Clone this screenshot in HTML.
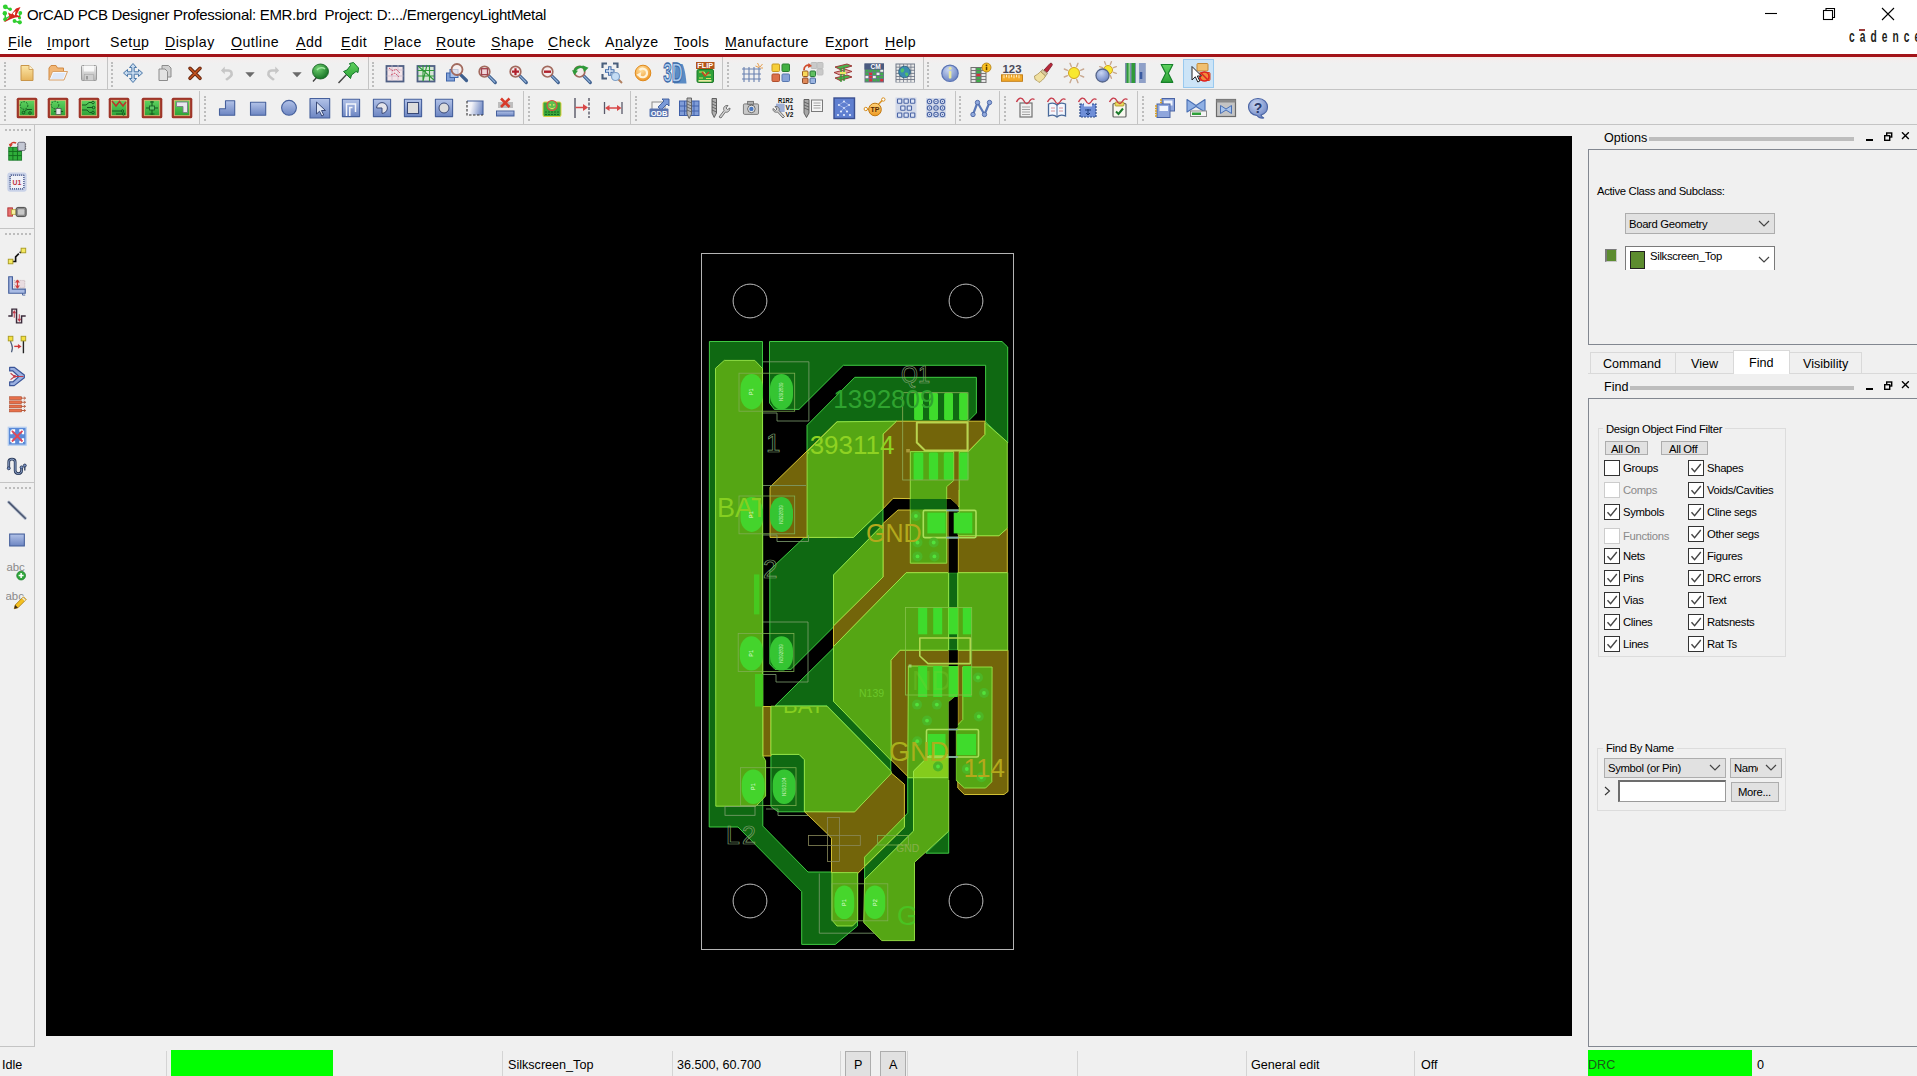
<!DOCTYPE html>
<html><head><meta charset="utf-8"><title>OrCAD PCB Designer</title>
<style>
*{box-sizing:border-box;margin:0;padding:0}
html,body{width:1917px;height:1076px;overflow:hidden;background:#f0f0f0;font-family:"Liberation Sans",sans-serif;color:#000}
.abs{position:absolute}
#titlebar{position:absolute;left:0;top:0;width:1917px;height:54px;background:#fff}
#title{position:absolute;left:27px;top:5px;font-size:15px;letter-spacing:-0.3px;line-height:19px;white-space:pre;color:#000}
.menu{position:absolute;top:33px;font-size:14.2px;letter-spacing:0.45px;line-height:19px;white-space:pre;color:#000}
.menu u{text-decoration:underline;text-underline-offset:1.5px;text-decoration-thickness:1px}
#redline{position:absolute;left:0;top:54px;width:1917px;height:3px;background:#a31318}
#tb1{position:absolute;left:0;top:57px;width:1917px;height:33px;background:linear-gradient(#f8e6e2 0,#f3eeee 3px,#f0f0f0 7px);border-bottom:1px solid #c4c4c4}
#tb2{position:absolute;left:0;top:91px;width:1917px;height:34px;background:#f0f0f0;border-bottom:1px solid #c4c4c4}
#canvas{position:absolute;left:46px;top:136px;width:1526px;height:900px;background:#000}
.t11{font-family:"Liberation Sans",sans-serif;font-size:11.3px;letter-spacing:-0.33px;margin-top:1px;line-height:13px;white-space:pre;position:absolute;color:#000}
.t13{font-family:"Liberation Sans",sans-serif;font-size:12.6px;margin-top:1px;line-height:15px;white-space:pre;position:absolute;color:#000}
.cb{position:absolute;width:16px;height:16px;margin-top:-1px;background:#fff;border:1px solid #333}
.cb.dis{border-color:#ccc}
.cb svg{position:absolute;left:0;top:0}
.vsep{position:absolute;width:1px;background:#c4c4c4}
.grip{position:absolute;width:2px;border-left:2px dotted #bdbdbd}
.gripH{position:absolute;height:2px;border-top:2px dotted #bdbdbd}
</style></head>
<body>
<div id="titlebar">
<svg class="abs" style="left:1px;top:3px" width="22" height="22" viewBox="0 0 22 22"><g stroke="#35c035" stroke-width="1.5" fill="none"><path d="M4.5 4 L9 6.5 M4 10.5 L4.5 16 M13.5 18 L18.5 19.5 M19 9.5 L18.5 14.5 M4.5 16 L9 13"/></g><g fill="#30d030"><circle cx="4.3" cy="3.8" r="2.4"/><circle cx="9.2" cy="6.3" r="1.7"/><circle cx="3.8" cy="10.3" r="2.2"/><circle cx="4.3" cy="16.3" r="2.1"/><circle cx="13.5" cy="18" r="1.9"/><circle cx="18.8" cy="19.3" r="2.1"/><circle cx="19.3" cy="10" r="1.9"/><circle cx="18.5" cy="14.8" r="1.6"/></g><path d="M2.5 19 C6 17 8.5 14.5 10.5 11 L15 5.5 L19.5 4 L17.5 8 L15.5 12 C17 12.3 18.5 13 19.5 14 C16.5 13.8 13 14.5 10 16 C7 17.5 4.5 19 2.5 19 Z" fill="#d6261c"/><path d="M11.5 10.5 L14.5 8 L13.8 12.5 Z" fill="#fff"/><path d="M7 9.5 L11 11.5 L8.5 14 Z" fill="#d6261c"/></svg>
<div id="title">OrCAD PCB Designer Professional: EMR.brd  Project: D:.../EmergencyLightMetal</div>
<div class="menu" style="left:8px" id="m0"><u>F</u>ile</div>
<div class="menu" style="left:47px" id="m1"><u>I</u>mport</div>
<div class="menu" style="left:110px" id="m2">Set<u>u</u>p</div>
<div class="menu" style="left:165px" id="m3"><u>D</u>isplay</div>
<div class="menu" style="left:231px" id="m4"><u>O</u>utline</div>
<div class="menu" style="left:296px" id="m5"><u>A</u>dd</div>
<div class="menu" style="left:341px" id="m6"><u>E</u>dit</div>
<div class="menu" style="left:384px" id="m7"><u>P</u>lace</div>
<div class="menu" style="left:436px" id="m8"><u>R</u>oute</div>
<div class="menu" style="left:491px" id="m9"><u>S</u>hape</div>
<div class="menu" style="left:548px" id="m10"><u>C</u>heck</div>
<div class="menu" style="left:605px" id="m11">A<u>n</u>alyze</div>
<div class="menu" style="left:674px" id="m12"><u>T</u>ools</div>
<div class="menu" style="left:725px" id="m13"><u>M</u>anufacture</div>
<div class="menu" style="left:825px" id="m14">E<u>x</u>port</div>
<div class="menu" style="left:885px" id="m15"><u>H</u>elp</div>
<svg class="abs" style="left:1750px;top:0" width="167" height="29" viewBox="0 0 167 29"><g fill="none" stroke="#000" stroke-width="1.1"><path d="M15 13.5 H27"/><path d="M76 10.5 V8.5 H84.5 V17.5 H82.5"/><rect x="73.5" y="10.5" width="9" height="9"/><path d="M132 8 L144 20 M144 8 L132 20"/></g></svg>
<div class="abs" id="cad" style="left:1849px;top:27.6px;font-family:'Liberation Sans',sans-serif;font-weight:bold;font-size:17px;line-height:18px;letter-spacing:8.4px;white-space:pre;color:#231f20;transform:scaleX(0.6);transform-origin:0 0">cadence</div>
<div class="abs" style="left:1859px;top:29px;width:6px;height:1.5px;background:#9b3a3a"></div>
</div>
<div id="redline"></div>
<div id="tb1"></div>
<div id="tb2"></div>
<div id="canvas"></div>

<svg width="0" height="0" style="position:absolute"><defs>
<linearGradient id="gb" x1="0" y1="0" x2="0" y2="1"><stop offset="0" stop-color="#b3c3e8"/><stop offset="1" stop-color="#6c85c2"/></linearGradient>
<linearGradient id="gg" x1="0" y1="0" x2="0" y2="1"><stop offset="0" stop-color="#5fd25f"/><stop offset="1" stop-color="#2ea338"/></linearGradient>
<linearGradient id="gy" x1="0" y1="0" x2="0" y2="1"><stop offset="0" stop-color="#fbe6a8"/><stop offset="1" stop-color="#e6b45c"/></linearGradient>
<linearGradient id="go" x1="0" y1="0" x2="0" y2="1"><stop offset="0" stop-color="#ffd27a"/><stop offset="1" stop-color="#ee9a22"/></linearGradient>
<linearGradient id="gs" x1="0" y1="0" x2="0" y2="1"><stop offset="0" stop-color="#eeeeee"/><stop offset="1" stop-color="#b4b4b4"/></linearGradient>
<radialGradient id="gball" cx="0.35" cy="0.3" r="0.8"><stop offset="0" stop-color="#6fd06f"/><stop offset="1" stop-color="#0e6a1e"/></radialGradient>
<radialGradient id="gib" cx="0.4" cy="0.3" r="0.8"><stop offset="0" stop-color="#c9d6f2"/><stop offset="1" stop-color="#5f79bd"/></radialGradient>
<radialGradient id="gor" cx="0.4" cy="0.3" r="0.8"><stop offset="0" stop-color="#ffe0a0"/><stop offset="1" stop-color="#ee8f1a"/></radialGradient>
</defs></svg>
<div class="vsep" style="left:107px;top:57px;height:33px"></div>
<div class="vsep" style="left:368px;top:57px;height:33px"></div>
<div class="vsep" style="left:722px;top:57px;height:33px"></div>
<div class="vsep" style="left:923px;top:57px;height:33px"></div>
<div class="grip" style="left:4px;top:62px;height:25px"></div>
<div class="grip" style="left:111px;top:62px;height:25px"></div>
<div class="grip" style="left:372px;top:62px;height:25px"></div>
<div class="grip" style="left:727px;top:62px;height:25px"></div>
<div class="grip" style="left:927px;top:62px;height:25px"></div>
<div class="vsep" style="left:199px;top:91px;height:33px"></div>
<div class="vsep" style="left:523px;top:91px;height:33px"></div>
<div class="vsep" style="left:630px;top:91px;height:33px"></div>
<div class="vsep" style="left:955px;top:91px;height:33px"></div>
<div class="vsep" style="left:999px;top:91px;height:33px"></div>
<div class="vsep" style="left:1137px;top:91px;height:33px"></div>
<div class="grip" style="left:4px;top:96px;height:25px"></div>
<div class="grip" style="left:204px;top:96px;height:25px"></div>
<div class="grip" style="left:528px;top:96px;height:25px"></div>
<div class="grip" style="left:635px;top:96px;height:25px"></div>
<div class="grip" style="left:959px;top:96px;height:25px"></div>
<div class="grip" style="left:1004px;top:96px;height:25px"></div>
<div class="grip" style="left:1142px;top:96px;height:25px"></div>
<div class="abs" style="left:1183px;top:59px;width:31px;height:29px;background:#cce4f7;border:1px solid #99c9ef"></div>
<svg class="abs" style="left:14.5px;top:61.3px" width="24" height="24" viewBox="0 0 24 24"><path d="M6 4.5 H14 L18 8.5 V19.5 H6 Z" fill="url(#gy)" stroke="#c9964a" stroke-width="1"/><path d="M14 4.5 V8.5 H18" fill="#fff4d0" stroke="#c9964a" stroke-width="0.8"/></svg>
<svg class="abs" style="left:46.0px;top:61.3px" width="24" height="24" viewBox="0 0 24 24"><path d="M3 19 V7 L5 4.5 H10 L11.5 7 H17.5 V10" fill="#f1b675" stroke="#d08a45" stroke-width="1"/><path d="M3 19 L6.5 10.5 H21.5 L18 19 Z" fill="#f4f8ff" stroke="#d9a066" stroke-width="1"/><path d="M5 18 L7.6 12 H19.5 L17 18Z" fill="#dfe8f8"/></svg>
<svg class="abs" style="left:76.8px;top:61.3px" width="24" height="24" viewBox="0 0 24 24"><rect x="4.5" y="4.5" width="15" height="15" rx="1" fill="url(#gs)" stroke="#9a9a9a"/><rect x="7" y="4.5" width="10" height="6" fill="#f8f8f8"/><rect x="7.5" y="13.5" width="9" height="6" fill="#cfcfcf" stroke="#a8a8a8" stroke-width="0.6"/><rect x="9" y="15" width="2" height="3.5" fill="#9a9a9a"/></svg>
<svg class="abs" style="left:121.4px;top:61.3px" width="24" height="24" viewBox="0 0 24 24"><g fill="#c9dcf0" stroke="#4b78a8" stroke-width="1" stroke-linejoin="round"><path d="M12 2.5 L15.5 6.5 H13.2 V10.8 H17.5 V8.5 L21.5 12 L17.5 15.5 V13.2 H13.2 V17.5 H15.5 L12 21.5 L8.5 17.5 H10.8 V13.2 H6.5 V15.5 L2.5 12 L6.5 8.5 V10.8 H10.8 V6.5 H8.5 Z"/></g></svg>
<svg class="abs" style="left:153.3px;top:61.3px" width="24" height="24" viewBox="0 0 24 24"><path d="M9 4.5 H15.5 L18 7 V16 H9 Z" fill="#d0d0d0" stroke="#8c8c8c"/><path d="M6 8 H12 L14.5 10.5 V19.5 H6 Z" fill="#e2e2e2" stroke="#8c8c8c"/></svg>
<svg class="abs" style="left:183.3px;top:61.3px" width="24" height="24" viewBox="0 0 24 24"><path d="M7 7.3 L17 17.3 M17 7.3 L7 17.3" stroke="#6a2a12" stroke-width="3.6" stroke-linecap="round"/><path d="M7 7.3 L17 17.3 M17 7.3 L7 17.3" stroke="#c4531e" stroke-width="1.5" stroke-linecap="round"/></svg>
<svg class="abs" style="left:215.2px;top:61.3px" width="24" height="24" viewBox="0 0 24 24"><g transform="translate(1.6 2.6) scale(0.86)"><path d="M7 8 H13.5 C17.5 8 18.5 12 16.5 14.5 C15 16.5 12.5 17.5 11 19" fill="none" stroke="#c6c6c6" stroke-width="3" /><path d="M9.5 3.5 L5 8 L9.5 12.5 Z" fill="#c6c6c6"/></g></svg>
<svg class="abs" style="left:238.3px;top:61.3px" width="24" height="24" viewBox="0 0 24 24"><path d="M7.3 11.3 H16.7 L12 16.2 Z" fill="#6a6a6a"/></svg>
<svg class="abs" style="left:260.5px;top:61.3px" width="24" height="24" viewBox="0 0 24 24"><g transform="translate(1.8 2.6) scale(0.86)"><path d="M17 8 H10.5 C6.5 8 5.5 12 7.5 14.5 C9 16.5 11.5 17.5 13 19" fill="none" stroke="#c6c6c6" stroke-width="3" /><path d="M14.5 3.5 L19 8 L14.5 12.5 Z" fill="#c6c6c6"/></g></svg>
<svg class="abs" style="left:284.7px;top:61.3px" width="24" height="24" viewBox="0 0 24 24"><path d="M7.3 11.3 H16.7 L12 16.2 Z" fill="#6a6a6a"/></svg>
<svg class="abs" style="left:308.0px;top:61.3px" width="24" height="24" viewBox="0 0 24 24"><path d="M5 20.5 L9 16" stroke="#3d3d3d" stroke-width="1.3"/><ellipse cx="12.5" cy="10.5" rx="8" ry="7.5" fill="url(#gball)" stroke="#0c5a1a" stroke-width="0.8"/><path d="M9 9 C11 6.5 15 6 17 8" fill="none" stroke="#9fe89f" stroke-width="1.5"/></svg>
<svg class="abs" style="left:336.2px;top:61.3px" width="24" height="24" viewBox="0 0 24 24"><path d="M2.5 22 L10.5 13.5" stroke="#444" stroke-width="1.4"/><path d="M7.5 10.5 L14.5 17.5 L15.5 14 L20 10.5 L22 11.5 L22.5 7 L17.5 1.5 L13.5 2.5 L14.5 4.5 L11 9 Z" fill="url(#gg)" stroke="#14752a" stroke-width="1"/></svg>
<svg class="abs" style="left:383.0px;top:61.3px" width="24" height="24" viewBox="0 0 24 24"><rect x="3.5" y="5" width="17" height="15.5" fill="#f3e4e8" stroke="#4f5f84" stroke-width="1.8"/><path d="M3.5 9 H20.5 M3.5 15 H20.5 M9 4 V20 M15 4 V20" stroke="#c9b8c8" stroke-width="0.7"/><path d="M6 7 L10 10 L13 8 L17 12 M8 14 L12 12 L16 16" stroke="#d0506a" stroke-width="1" fill="none" stroke-dasharray="2 1"/></svg>
<svg class="abs" style="left:414.3px;top:61.3px" width="24" height="24" viewBox="0 0 24 24"><rect x="3.5" y="5" width="17" height="15.5" fill="#d6e6d6" stroke="#4f5f84" stroke-width="1.8"/><path d="M3.5 9.5 H20.5 M3.5 15 H20.5 M9 4 V20 M15.5 4 V20 M4 5 L20 19 M9 20 L13 4" stroke="#2f9a3a" stroke-width="1.1"/></svg>
<svg class="abs" style="left:444.5px;top:61.3px" width="24" height="24" viewBox="0 0 24 24"><rect x="1.5" y="12" width="8" height="8" fill="#7fa0d8" stroke="#3f64a8"/><rect x="5" y="8.5" width="8" height="8" fill="#a9c3ec" stroke="#3f64a8"/><path d="M15.8 13.8 L21.5 19.5" stroke="#3e5f8e" stroke-width="3.2" stroke-linecap="round"/><circle cx="12" cy="8.5" r="5.5" fill="#f6eeee" fill-opacity="0.7" stroke="#a26a5e" stroke-width="1.8"/></svg>
<svg class="abs" style="left:475.0px;top:61.3px" width="24" height="24" viewBox="0 0 24 24"><g transform="translate(0 1.2)"><path d="M13.5 13.5 L20.3 20.3" stroke="#3e5f8e" stroke-width="3.2" stroke-linecap="round"/><path d="M13.5 13.5 L19.8 19.8" stroke="#8fb0d8" stroke-width="1.2" stroke-linecap="round"/><circle cx="9.5" cy="9.5" r="5.3" fill="#f4ecec" stroke="#a26a5e" stroke-width="1.7"/><rect x="6.5" y="6.5" width="6" height="6" fill="#f0d8dc" stroke="#a0404c" stroke-width="1.3"/></g></svg>
<svg class="abs" style="left:506.3px;top:61.3px" width="24" height="24" viewBox="0 0 24 24"><g transform="translate(0 1.2)"><path d="M13.5 13.5 L20.3 20.3" stroke="#3e5f8e" stroke-width="3.2" stroke-linecap="round"/><path d="M13.5 13.5 L19.8 19.8" stroke="#8fb0d8" stroke-width="1.2" stroke-linecap="round"/><circle cx="9.5" cy="9.5" r="5.3" fill="#f4ecec" stroke="#a26a5e" stroke-width="1.7"/><path d="M6 9.5 H13 M9.5 6 V13" stroke="#b0202c" stroke-width="2.2"/></g></svg>
<svg class="abs" style="left:538.0px;top:61.3px" width="24" height="24" viewBox="0 0 24 24"><g transform="translate(0 1.2)"><path d="M13.5 13.5 L20.3 20.3" stroke="#3e5f8e" stroke-width="3.2" stroke-linecap="round"/><path d="M13.5 13.5 L19.8 19.8" stroke="#8fb0d8" stroke-width="1.2" stroke-linecap="round"/><circle cx="9.5" cy="9.5" r="5.3" fill="#f4ecec" stroke="#a26a5e" stroke-width="1.7"/><path d="M6 9.5 H13" stroke="#b0202c" stroke-width="2.4"/></g></svg>
<svg class="abs" style="left:570.0px;top:61.3px" width="24" height="24" viewBox="0 0 24 24"><g transform="translate(0 1.2)"><path d="M13.5 13.5 L20.3 20.3" stroke="#3e5f8e" stroke-width="3.2" stroke-linecap="round"/><path d="M13.5 13.5 L19.8 19.8" stroke="#8fb0d8" stroke-width="1.2" stroke-linecap="round"/><circle cx="9.5" cy="9.5" r="5.3" fill="#f4ecec" stroke="#a26a5e" stroke-width="1.7"/><path d="M4.5 10 C5 5 11 3 15.5 6.5" fill="none" stroke="#2f9a3a" stroke-width="2.4"/><path d="M12.5 3 L18.5 5.5 L14 10 Z" fill="#2f9a3a"/><path d="M2 8 L8 8.5 L4.5 13 Z" fill="#2f9a3a"/></g></svg>
<svg class="abs" style="left:600.0px;top:61.3px" width="24" height="24" viewBox="0 0 24 24"><path d="M2.5 7 V2.5 H7 M13 2.5 H17.5 V7 M17.5 13 V17.5 H13 M7 17.5 H2.5 V13" fill="none" stroke="#4a5f7c" stroke-width="2.1"/><path d="M5 10 H14.5 M9.8 5.2 V14.8" stroke="#3f6aa8" stroke-width="3.4"/><path d="M6 10 H13.5 M9.8 6.2 V13.8" stroke="#e4eefa" stroke-width="1.3"/><path d="M17.5 17.5 L22 22" stroke="#b08060" stroke-width="2"/><circle cx="15.5" cy="15.5" r="4" fill="#c4dcf4" stroke="#7fa0c8" stroke-width="1.2"/></svg>
<svg class="abs" style="left:630.7px;top:61.3px" width="24" height="24" viewBox="0 0 24 24"><circle cx="12" cy="12" r="7.8" fill="url(#gor)" stroke="#e08a1c" stroke-width="1"/><path d="M8.5 9 C11 6.5 16 8 16 12 C16 16 11.5 17.5 8.5 15" fill="none" stroke="#fff3d8" stroke-width="2.2"/><path d="M6 12.5 L11.5 12 L8.5 17 Z" fill="#fff3d8" transform="rotate(-25 8.5 14.5)"/></svg>
<svg class="abs" style="left:662.5px;top:61.3px" width="24" height="24" viewBox="0 0 24 24"><path d="M13 3 H19.5 C22 8 23 17 23.5 22.5 H11 Z" fill="#5b8bc4"/><text x="0.3" y="21.3" font-family="Liberation Sans, sans-serif" font-weight="bold" font-size="27" fill="#aecdf0" stroke="#3a6aa8" stroke-width="1.3" textLength="19.5" lengthAdjust="spacingAndGlyphs">3D</text></svg>
<svg class="abs" style="left:693.2px;top:61.3px" width="24" height="24" viewBox="0 0 24 24"><rect x="3" y="1" width="18.5" height="7" fill="#b4561a"/><text x="12.2" y="7" font-family="Liberation Sans, sans-serif" font-weight="bold" font-size="6.8" fill="#fff" text-anchor="middle" textLength="16" lengthAdjust="spacingAndGlyphs">FLIP</text><rect x="4" y="8.5" width="16.5" height="13" rx="1.5" fill="#2fa23a" stroke="#1f7a2a"/><path d="M6 11 H11 L13 14 H18 M6 17 H10 M13 17.5 H18" stroke="#d8e060" stroke-width="1.1" fill="none"/><path d="M9 11 L12 15 L16 11" stroke="#d04020" stroke-width="1.4" fill="none"/><rect x="5.5" y="19" width="13" height="1.7" fill="#e8e8a0"/></svg>
<svg class="abs" style="left:738.5px;top:61.3px" width="24" height="24" viewBox="0 0 24 24"><path d="M5 6 V21 M10 6 V21 M15 6 V21 M20 6 V21 M3 8 H22 M3 13 H22 M3 18 H22" stroke="#6880b0" stroke-width="1.1"/><path d="M20.5 6 L18.5 2 M21 6 L23.5 3 M20 6.5 L16.5 5 M21.5 7 L24 7" stroke="#e8943a" stroke-width="0.9"/></svg>
<svg class="abs" style="left:769.2px;top:61.3px" width="24" height="24" viewBox="0 0 24 24"><rect x="3" y="3" width="7.5" height="7.5" rx="1" fill="#f6cf3a" stroke="#c89a20" stroke-width="1"/><rect x="13" y="3" width="7.5" height="7.5" rx="1" fill="#43b043" stroke="#2a8030" stroke-width="1"/><rect x="3" y="13" width="7.5" height="7.5" rx="1" fill="#dc7048" stroke="#b05030" stroke-width="1"/><rect x="13" y="13" width="7.5" height="7.5" rx="1" fill="#88a4d8" stroke="#5878b0" stroke-width="1"/></svg>
<svg class="abs" style="left:800.3px;top:61.3px" width="24" height="24" viewBox="0 0 24 24"><rect x="11" y="1.5" width="6" height="6" rx="1" fill="#c9c9c9" stroke="#bdbdbd" stroke-width="1"/><rect x="17" y="1.5" width="6" height="6" rx="1" fill="#c9c9c9" stroke="#bdbdbd" stroke-width="1"/><rect x="17" y="8" width="6" height="6" rx="1" fill="#c9c9c9" stroke="#bdbdbd" stroke-width="1"/><rect x="2.5" y="10" width="5.5" height="5.5" rx="1" fill="#f6d85a" stroke="#9a5a20" stroke-width="1"/><rect x="10" y="10" width="5.5" height="5.5" rx="1" fill="#5fbf5f" stroke="#2a7a3a" stroke-width="1"/><rect x="2.5" y="17" width="5.5" height="5.5" rx="1" fill="#e08a5a" stroke="#8a4a2a" stroke-width="1"/><rect x="10" y="17" width="5.5" height="5.5" rx="1" fill="#9ab4e0" stroke="#4a6a9a" stroke-width="1"/><path d="M4 9 C4 5 7 3.5 10 4.5" fill="none" stroke="#d04a2a" stroke-width="1.8"/><path d="M8.5 2 L12 5 L8 7 Z" fill="#d04a2a"/></svg>
<svg class="abs" style="left:831.3px;top:61.3px" width="24" height="24" viewBox="0 0 24 24"><path d="M4 6 L16 3 L21 5 L9 8.5 Z" fill="#4db04d" stroke="#a03a3a" stroke-width="1"/><path d="M3 11.5 L15 8.5 L21 10.5 L9 14 Z" fill="#e8a8a0" stroke="#a03a3a" stroke-width="1"/><path d="M4 17 L16 14 L21 16 L9 19.5 Z" fill="#4db04d" stroke="#a03a3a" stroke-width="1"/><path d="M10 7 V21 M13 6 V20" stroke="#3a9a3a" stroke-width="1.4"/><rect x="9" y="11" width="6" height="2" fill="#e8e860"/></svg>
<svg class="abs" style="left:861.9px;top:61.3px" width="24" height="24" viewBox="0 0 24 24"><rect x="2.5" y="2.5" width="19.5" height="19" fill="#6a7488"/><rect x="3.5" y="8.5" width="2.9" height="2.3" fill="#3fae4a"/><rect x="7.2" y="8.5" width="2.9" height="2.3" fill="#3fae4a"/><rect x="10.9" y="8.5" width="2.9" height="2.3" fill="#3fae4a"/><rect x="14.6" y="8.5" width="2.9" height="2.3" fill="#3fae4a"/><rect x="18.3" y="8.5" width="2.9" height="2.3" fill="#eeeeee"/><rect x="3.5" y="11.7" width="2.9" height="2.3" fill="#3fae4a"/><rect x="7.2" y="11.7" width="2.9" height="2.3" fill="#d8303a"/><rect x="10.9" y="11.7" width="2.9" height="2.3" fill="#3fae4a"/><rect x="14.6" y="11.7" width="2.9" height="2.3" fill="#eeeeee"/><rect x="18.3" y="11.7" width="2.9" height="2.3" fill="#3fae4a"/><rect x="3.5" y="14.9" width="2.9" height="2.3" fill="#eeeeee"/><rect x="7.2" y="14.9" width="2.9" height="2.3" fill="#d8303a"/><rect x="10.9" y="14.9" width="2.9" height="2.3" fill="#eeeeee"/><rect x="14.6" y="14.9" width="2.9" height="2.3" fill="#3fae4a"/><rect x="18.3" y="14.9" width="2.9" height="2.3" fill="#3fae4a"/><rect x="3.5" y="18.1" width="2.9" height="2.3" fill="#3fae4a"/><rect x="7.2" y="18.1" width="2.9" height="2.3" fill="#d8303a"/><rect x="10.9" y="18.1" width="2.9" height="2.3" fill="#3fae4a"/><rect x="14.6" y="18.1" width="2.9" height="2.3" fill="#3fae4a"/><rect x="18.3" y="18.1" width="2.9" height="2.3" fill="#d8303a"/><rect x="2.5" y="2.5" width="19.5" height="6" fill="#4a5a80"/><text x="13.5" y="8" font-family="Liberation Sans, sans-serif" font-weight="bold" font-size="6.5" fill="#fff" text-anchor="middle">CM</text></svg>
<svg class="abs" style="left:892.9px;top:61.3px" width="24" height="24" viewBox="0 0 24 24"><rect x="2.5" y="2.5" width="19.5" height="19" fill="#707888"/><rect x="3.5" y="3.5" width="2.9" height="2.2" fill="#e8e8e8"/><rect x="7.2" y="3.5" width="2.9" height="2.2" fill="#e8e8e8"/><rect x="10.9" y="3.5" width="2.9" height="2.2" fill="#e8e8e8"/><rect x="14.6" y="3.5" width="2.9" height="2.2" fill="#e8e8e8"/><rect x="18.3" y="3.5" width="2.9" height="2.2" fill="#e8e8e8"/><rect x="3.5" y="6.6" width="2.9" height="2.2" fill="#e8e8e8"/><rect x="7.2" y="6.6" width="2.9" height="2.2" fill="#e8e8e8"/><rect x="10.9" y="6.6" width="2.9" height="2.2" fill="#e8e8e8"/><rect x="14.6" y="6.6" width="2.9" height="2.2" fill="#e8e8e8"/><rect x="18.3" y="6.6" width="2.9" height="2.2" fill="#e8e8e8"/><rect x="3.5" y="9.7" width="2.9" height="2.2" fill="#e8e8e8"/><rect x="7.2" y="9.7" width="2.9" height="2.2" fill="#e8e8e8"/><rect x="10.9" y="9.7" width="2.9" height="2.2" fill="#e8e8e8"/><rect x="14.6" y="9.7" width="2.9" height="2.2" fill="#e8e8e8"/><rect x="18.3" y="9.7" width="2.9" height="2.2" fill="#e8e8e8"/><rect x="3.5" y="12.8" width="2.9" height="2.2" fill="#e8e8e8"/><rect x="7.2" y="12.8" width="2.9" height="2.2" fill="#e8e8e8"/><rect x="10.9" y="12.8" width="2.9" height="2.2" fill="#e8e8e8"/><rect x="14.6" y="12.8" width="2.9" height="2.2" fill="#e8e8e8"/><rect x="18.3" y="12.8" width="2.9" height="2.2" fill="#e8e8e8"/><rect x="3.5" y="15.9" width="2.9" height="2.2" fill="#e8e8e8"/><rect x="7.2" y="15.9" width="2.9" height="2.2" fill="#e8e8e8"/><rect x="10.9" y="15.9" width="2.9" height="2.2" fill="#e8e8e8"/><rect x="14.6" y="15.9" width="2.9" height="2.2" fill="#e8e8e8"/><rect x="18.3" y="15.9" width="2.9" height="2.2" fill="#e8e8e8"/><rect x="3.5" y="19.0" width="2.9" height="2.2" fill="#e8e8e8"/><rect x="7.2" y="19.0" width="2.9" height="2.2" fill="#e8e8e8"/><rect x="10.9" y="19.0" width="2.9" height="2.2" fill="#e8e8e8"/><rect x="14.6" y="19.0" width="2.9" height="2.2" fill="#e8e8e8"/><rect x="18.3" y="19.0" width="2.9" height="2.2" fill="#e8e8e8"/><circle cx="11.5" cy="11" r="5.8" fill="#3a8ab0" stroke="#245a78" stroke-width="0.8"/><path d="M8 8 C10 6 12 8 11 10 C10 12 8 12 7.5 10 Z M12 12 C14 11 16 12 15 14.5 C14 16 12 15 12 12Z" fill="#4fc06a"/></svg>
<svg class="abs" style="left:938.0px;top:61.3px" width="24" height="24" viewBox="0 0 24 24"><circle cx="12" cy="12.3" r="8.2" fill="url(#gib)" stroke="#5a74b4" stroke-width="1.2"/><rect x="10.8" y="10" width="2.6" height="7.5" rx="0.8" fill="#e8e8a0"/><circle cx="12.1" cy="7.3" r="1.5" fill="#e8e8a0"/></svg>
<svg class="abs" style="left:968.2px;top:61.3px" width="24" height="24" viewBox="0 0 24 24"><rect x="2.5" y="6" width="16" height="16" fill="#707070"/><rect x="3.5" y="7.0" width="4" height="2.1" fill="#e6e6e6"/><rect x="8.5" y="7.0" width="4" height="2.1" fill="#3fae4a"/><rect x="13.5" y="7.0" width="4" height="2.1" fill="#e6e6e6"/><rect x="3.5" y="10.0" width="4" height="2.1" fill="#e6e6e6"/><rect x="8.5" y="10.0" width="4" height="2.1" fill="#3fae4a"/><rect x="13.5" y="10.0" width="4" height="2.1" fill="#e6e6e6"/><rect x="3.5" y="13.0" width="4" height="2.1" fill="#e6e6e6"/><rect x="8.5" y="13.0" width="4" height="2.1" fill="#d8303a"/><rect x="13.5" y="13.0" width="4" height="2.1" fill="#e6e6e6"/><rect x="3.5" y="16.0" width="4" height="2.1" fill="#e6e6e6"/><rect x="8.5" y="16.0" width="4" height="2.1" fill="#3fae4a"/><rect x="13.5" y="16.0" width="4" height="2.1" fill="#e6e6e6"/><rect x="3.5" y="19.0" width="4" height="2.1" fill="#e6e6e6"/><rect x="8.5" y="19.0" width="4" height="2.1" fill="#3fae4a"/><rect x="13.5" y="19.0" width="4" height="2.1" fill="#e6e6e6"/><circle cx="18.5" cy="6.5" r="4.5" fill="#f8c020" stroke="#b07a10" stroke-width="0.8"/><rect x="17.8" y="5.8" width="1.5" height="3.4" fill="#5a3a00"/><circle cx="18.5" cy="4.3" r="0.9" fill="#5a3a00"/></svg>
<svg class="abs" style="left:1000.0px;top:61.3px" width="24" height="24" viewBox="0 0 24 24"><g transform="translate(0 1.3)"><text x="12" y="10.5" font-family="Liberation Sans, sans-serif" font-weight="bold" font-size="10" fill="#4a4a5a" text-anchor="middle" textLength="19" lengthAdjust="spacingAndGlyphs">123</text><rect x="1.5" y="12.5" width="21" height="6.5" fill="#f3aa2a" stroke="#c07a10" stroke-width="0.9"/><path d="M4 12.5 V16 M6.5 12.5 V15 M9 12.5 V16 M11.5 12.5 V15 M14 12.5 V16 M16.5 12.5 V15 M19 12.5 V16" stroke="#fff3d0" stroke-width="0.9"/></g></svg>
<svg class="abs" style="left:1031.4px;top:61.3px" width="24" height="24" viewBox="0 0 24 24"><path d="M13 9 L19 2.5 C20.5 1.5 22 3 21 4.5 L16 11.5 Z" fill="#b8283a" stroke="#7a1a28" stroke-width="0.8"/><path d="M11.5 8.5 L16.5 12.5 L14.5 15 L9.5 11 Z" fill="#d8c8a0" stroke="#8a7a50" stroke-width="0.7"/><path d="M9.5 10.5 L14.5 15 C13 18 10 20.5 8 21.5 L6 19.5 L4 18.5 L3.5 15 C5.5 14 8 12.5 9.5 10.5 Z" fill="#f0e0a0" stroke="#a89050" stroke-width="0.8"/></svg>
<svg class="abs" style="left:1061.8px;top:61.3px" width="24" height="24" viewBox="0 0 24 24"><path d="M18.5 14.7 L21.7 16.0" stroke="#c8a890" stroke-width="1.4" stroke-linecap="round"/><path d="M14.7 18.5 L16.0 21.7" stroke="#c8a890" stroke-width="1.4" stroke-linecap="round"/><path d="M9.3 18.5 L8.0 21.7" stroke="#c8a890" stroke-width="1.4" stroke-linecap="round"/><path d="M5.5 14.7 L2.3 16.0" stroke="#c8a890" stroke-width="1.4" stroke-linecap="round"/><path d="M5.5 9.3 L2.3 8.0" stroke="#c8a890" stroke-width="1.4" stroke-linecap="round"/><path d="M9.3 5.5 L8.0 2.3" stroke="#c8a890" stroke-width="1.4" stroke-linecap="round"/><path d="M14.7 5.5 L16.0 2.3" stroke="#c8a890" stroke-width="1.4" stroke-linecap="round"/><path d="M18.5 9.3 L21.7 8.0" stroke="#c8a890" stroke-width="1.4" stroke-linecap="round"/><circle cx="12" cy="12" r="5.5" fill="#f8e830" stroke="#d0a020" stroke-width="1"/></svg>
<svg class="abs" style="left:1093.3px;top:61.3px" width="24" height="24" viewBox="0 0 24 24"><path d="M20.5 11.3 L23.3 12.4" stroke="#c8a890" stroke-width="1.4" stroke-linecap="round"/><path d="M17.3 14.5 L18.4 17.3" stroke="#c8a890" stroke-width="1.4" stroke-linecap="round"/><path d="M12.7 14.5 L11.6 17.3" stroke="#c8a890" stroke-width="1.4" stroke-linecap="round"/><path d="M9.5 11.3 L6.7 12.4" stroke="#c8a890" stroke-width="1.4" stroke-linecap="round"/><path d="M9.5 6.7 L6.7 5.6" stroke="#c8a890" stroke-width="1.4" stroke-linecap="round"/><path d="M12.7 3.5 L11.6 0.7" stroke="#c8a890" stroke-width="1.4" stroke-linecap="round"/><path d="M17.3 3.5 L18.4 0.7" stroke="#c8a890" stroke-width="1.4" stroke-linecap="round"/><path d="M20.5 6.7 L23.3 5.6" stroke="#c8a890" stroke-width="1.4" stroke-linecap="round"/><circle cx="15" cy="9" r="4.5" fill="#f8e830" stroke="#d0a020" stroke-width="1"/><circle cx="9.5" cy="14.5" r="6.5" fill="url(#gib)" stroke="#56668a" stroke-width="1.3"/></svg>
<svg class="abs" style="left:1123.4px;top:61.3px" width="24" height="24" viewBox="0 0 24 24"><rect x="2" y="2" width="20.5" height="20" fill="#8090b0"/><rect x="3.5" y="2" width="3.5" height="20" fill="#2f9a3a"/><rect x="8.5" y="2" width="3.5" height="20" fill="#2f9a3a"/><rect x="5.5" y="2" width="1.5" height="20" fill="#8fd08f"/><rect x="13" y="2" width="3" height="20" fill="#dfe4ee"/><rect x="16" y="2" width="6.5" height="20" fill="#8fa0c8"/><rect x="16.8" y="11" width="2.5" height="7" fill="#3a5aa0"/></svg>
<svg class="abs" style="left:1154.5px;top:61.3px" width="24" height="24" viewBox="0 0 24 24"><path d="M6.2 3.5 H17.8 L13.3 12.3 L17.8 21.3 H6.2 L10.7 12.3 Z" fill="url(#gg)" stroke="#17802a" stroke-width="1.2" stroke-linejoin="round"/></svg>
<svg class="abs" style="left:1187.0px;top:61.3px" width="24" height="24" viewBox="0 0 24 24"><rect x="10" y="2.5" width="11" height="7.5" rx="1" fill="#f0c070" stroke="#c08a3a"/><rect x="12.5" y="11.5" width="10.5" height="8" rx="1" fill="#f0a040" stroke="#d04020"/><circle cx="17.5" cy="15.5" r="4.5" fill="#f08a3a" stroke="#e02020" stroke-width="1.5"/><path d="M14.5 12.5 L20.5 18.5" stroke="#e02020" stroke-width="1.5"/><path d="M5 5.5 V19 L8.3 15.8 L10.8 21 L12.8 20 L10.3 15 H14.5 Z" fill="#fff" stroke="#222" stroke-width="1" stroke-linejoin="round"/></svg>
<svg class="abs" style="left:14.6px;top:95.5px" width="24" height="24" viewBox="0 0 24 24"><rect x="1.7" y="1.7" width="20.6" height="20.6" rx="1.6" fill="#9e3529"/><rect x="3.9" y="3.9" width="16.2" height="16.2" fill="#dcb070"/><rect x="4.8" y="4.8" width="14.4" height="14.4" fill="url(#gg)"/><circle cx="9" cy="9.5" r="3.8" fill="none" stroke="#155a20" stroke-width="1" stroke-dasharray="1.6 1.2"/><path d="M9 16 L12 13.5 H17" fill="none" stroke="#155a20" stroke-width="1"/><circle cx="8.5" cy="16.5" r="1.3" fill="none" stroke="#155a20"/><circle cx="15" cy="17" r="1.3" fill="none" stroke="#155a20"/></svg>
<svg class="abs" style="left:45.6px;top:95.5px" width="24" height="24" viewBox="0 0 24 24"><rect x="1.7" y="1.7" width="20.6" height="20.6" rx="1.6" fill="#9e3529"/><rect x="3.9" y="3.9" width="16.2" height="16.2" fill="#dcb070"/><rect x="4.8" y="4.8" width="14.4" height="14.4" fill="url(#gg)"/><circle cx="9" cy="9" r="3.8" fill="none" stroke="#155a20" stroke-width="1" stroke-dasharray="1.6 1.2"/><rect x="10" y="12.5" width="5" height="6" fill="#e8e8e8" stroke="#555" stroke-width="0.8"/><path d="M8 15.5 H10 M15 15.5 H17" stroke="#155a20"/></svg>
<svg class="abs" style="left:76.5px;top:95.5px" width="24" height="24" viewBox="0 0 24 24"><rect x="1.7" y="1.7" width="20.6" height="20.6" rx="1.6" fill="#9e3529"/><rect x="3.9" y="3.9" width="16.2" height="16.2" fill="#dcb070"/><rect x="4.8" y="4.8" width="14.4" height="14.4" fill="url(#gg)"/><path d="M5 9 H9 L12 6.5 H15 M5 14 H10 L12.5 16.5 H15 M10 11.5 H16" fill="none" stroke="#155a20" stroke-width="1"/><circle cx="16" cy="6.5" r="1.3" fill="none" stroke="#155a20"/><circle cx="16.5" cy="11.5" r="1.3" fill="none" stroke="#155a20"/><circle cx="16" cy="16.5" r="1.3" fill="none" stroke="#155a20"/></svg>
<svg class="abs" style="left:107.4px;top:95.5px" width="24" height="24" viewBox="0 0 24 24"><rect x="1.7" y="1.7" width="20.6" height="20.6" rx="1.6" fill="#9e3529"/><rect x="3.9" y="3.9" width="16.2" height="16.2" fill="#dcb070"/><rect x="4.8" y="4.8" width="14.4" height="14.4" fill="url(#gg)"/><path d="M5 5 L9 10 L12.5 5.5 L16 10 L19 6" fill="none" stroke="#c0302a" stroke-width="1.4"/><path d="M5 15 H14 M9 18 H15" stroke="#155a20" stroke-width="1"/><circle cx="15.5" cy="15" r="1.2" fill="none" stroke="#155a20"/><circle cx="16.5" cy="18" r="1.2" fill="none" stroke="#155a20"/></svg>
<svg class="abs" style="left:139.5px;top:95.5px" width="24" height="24" viewBox="0 0 24 24"><rect x="1.7" y="1.7" width="20.6" height="20.6" rx="1.6" fill="#9e3529"/><rect x="3.9" y="3.9" width="16.2" height="16.2" fill="#dcb070"/><rect x="4.8" y="4.8" width="14.4" height="14.4" fill="url(#gg)"/><path d="M12 5 V19 M6 12 H18 M10 6 H14 M9.5 18 H14.5" stroke="#155a20" stroke-width="1.1"/><rect x="9.5" y="10" width="5" height="4" fill="#5fc76a" stroke="#155a20" stroke-width="0.8"/></svg>
<svg class="abs" style="left:169.6px;top:95.5px" width="24" height="24" viewBox="0 0 24 24"><rect x="1.7" y="1.7" width="20.6" height="20.6" rx="1.6" fill="#9e3529"/><rect x="3.9" y="3.9" width="16.2" height="16.2" fill="#dcb070"/><rect x="4.8" y="4.8" width="14.4" height="14.4" fill="url(#gg)"/><path d="M6.5 6 H17.5 V16.5 H13 V10.5 H6.5 Z" fill="#e8e8ee" stroke="#7a7a88" stroke-width="0.9"/></svg>
<svg class="abs" style="left:215.1px;top:95.5px" width="24" height="24" viewBox="0 0 24 24"><path d="M4.5 19.3 V12.8 H10.5 V4.8 H19.7 V19.3 Z" fill="url(#gb)" stroke="#46609c" stroke-width="1.1" stroke-linejoin="round"/></svg>
<svg class="abs" style="left:245.8px;top:95.5px" width="24" height="24" viewBox="0 0 24 24"><path d="M4.5 6.3 H19.7 V19.2 H4.5 Z" fill="url(#gb)" stroke="#46609c" stroke-width="1.1" stroke-linejoin="round"/></svg>
<svg class="abs" style="left:276.9px;top:95.5px" width="24" height="24" viewBox="0 0 24 24"><circle cx="12" cy="11.8" r="7.4" fill="url(#gb)" stroke="#46609c" stroke-width="1.1"/></svg>
<svg class="abs" style="left:307.8px;top:95.5px" width="24" height="24" viewBox="0 0 24 24"><path d="M2 2.5 H21.7 V22 H2 Z" fill="url(#gb)" stroke="#46609c" stroke-width="1.1" stroke-linejoin="round"/><path d="M8.5 6 V18 L11.5 15.3 L13.8 20 L15.8 19 L13.5 14.5 H17.5 Z" fill="#dfe6f4" stroke="#3a4a78" stroke-width="1"/></svg>
<svg class="abs" style="left:339.0px;top:95.5px" width="24" height="24" viewBox="0 0 24 24"><path d="M3.4 3.2 H20.6 V20.6 H3.4 Z" fill="url(#gb)" stroke="#46609c" stroke-width="1.1" stroke-linejoin="round"/><path d="M7.5 20 V8 H16.5 V16 M10.8 20 V11.5 H13.5" fill="none" stroke="#f4f6fb" stroke-width="1.5"/></svg>
<svg class="abs" style="left:370.1px;top:95.5px" width="24" height="24" viewBox="0 0 24 24"><path d="M3.4 3.2 H20.6 V20.6 H3.4 Z" fill="url(#gb)" stroke="#46609c" stroke-width="1.1" stroke-linejoin="round"/><path d="M12 12 H6.6 A5.4 5.4 0 1 1 12 17.4 Z" fill="#e4e4ea" stroke="#3a4a78" stroke-width="1"/></svg>
<svg class="abs" style="left:401.1px;top:95.5px" width="24" height="24" viewBox="0 0 24 24"><path d="M3.4 3.2 H20.6 V20.6 H3.4 Z" fill="url(#gb)" stroke="#46609c" stroke-width="1.1" stroke-linejoin="round"/><rect x="6.5" y="6.5" width="11" height="11" fill="#dcdcdc" stroke="#3a4a78" stroke-width="1"/></svg>
<svg class="abs" style="left:432.1px;top:95.5px" width="24" height="24" viewBox="0 0 24 24"><path d="M3.4 3.2 H20.6 V20.6 H3.4 Z" fill="url(#gb)" stroke="#46609c" stroke-width="1.1" stroke-linejoin="round"/><circle cx="12" cy="12" r="5" fill="#dcdcdc" stroke="#3a4a78" stroke-width="1"/></svg>
<svg class="abs" style="left:462.8px;top:95.5px" width="24" height="24" viewBox="0 0 24 24"><defs><linearGradient id="gd" x1="0" y1="0.4" x2="1" y2="0.6"><stop offset="0.25" stop-color="#f4f4f8"/><stop offset="1" stop-color="#6f88c4"/></linearGradient></defs><path d="M4 5 H20 V19 H4 Z" fill="url(#gd)"/><path d="M4 5 H20 V19" fill="none" stroke="#46609c" stroke-width="1.1"/><path d="M4 5 V19 H20" fill="none" stroke="#333" stroke-width="1.1" stroke-dasharray="2.5 1.5"/></svg>
<svg class="abs" style="left:493.0px;top:95.5px" width="24" height="24" viewBox="0 0 24 24"><rect x="5" y="6" width="15" height="6" fill="#bdbdbd"/><path d="M8 2.5 L16.5 11 M16.5 2.5 L8 11" stroke="#d83a2a" stroke-width="2.6"/><rect x="3.5" y="15" width="17.5" height="5" fill="url(#gb)" stroke="#46609c"/></svg>
<svg class="abs" style="left:539.6px;top:95.5px" width="24" height="24" viewBox="0 0 24 24"><rect x="3" y="6" width="18" height="14.5" rx="1.5" fill="#3aa83a" stroke="#e0d040" stroke-width="1"/><circle cx="12" cy="9.5" r="5" fill="#5fc050" stroke="#d85040" stroke-width="1.2"/><circle cx="10.2" cy="8.8" r="0.9" fill="#e8e060"/><circle cx="13.8" cy="8.8" r="0.9" fill="#e8e060"/><path d="M9.5 11.5 C11 13 13 13 14.5 11.5" stroke="#e8e060" fill="none"/><path d="M5 16 H19 M5 18.5 H19" stroke="#126a22" stroke-width="1.1" stroke-dasharray="2 1"/></svg>
<svg class="abs" style="left:570.2px;top:95.5px" width="24" height="24" viewBox="0 0 24 24"><path d="M5 2 V22" stroke="#4a4a5a" stroke-width="1.3"/><path d="M19 2 V22" stroke="#4a4a5a" stroke-width="1.3" stroke-dasharray="3 1.5"/><path d="M5.5 11.5 H15" stroke="#d84848" stroke-width="1.5"/><path d="M13 8 L18 11.5 L13 15 Z" fill="#d84848"/></svg>
<svg class="abs" style="left:601.2px;top:95.5px" width="24" height="24" viewBox="0 0 24 24"><path d="M3.5 6 V18 M21 6 V18" stroke="#5a5a6a" stroke-width="1.3"/><path d="M6 12 H18.5" stroke="#d84848" stroke-width="1.5"/><path d="M8.5 9 L4 12 L8.5 15 Z M16 9 L20.5 12 L16 15 Z" fill="#d84848"/></svg>
<svg class="abs" style="left:646.5px;top:95.5px" width="24" height="24" viewBox="0 0 24 24"><rect x="5" y="6" width="13" height="9" fill="#f4f4f4" stroke="#8a8a8a"/><path d="M11 11 L17 5 L15 3 H22 V10 L20 8 L14 14 Z" fill="#7a9ad8" stroke="#3a5a9a" stroke-width="0.9"/><rect x="2.5" y="12.5" width="19" height="8.5" rx="1" fill="#5a74b0"/><text x="12" y="19.5" font-family="Liberation Sans, sans-serif" font-weight="bold" font-size="7.5" fill="#fff" text-anchor="middle">ODB</text></svg>
<svg class="abs" style="left:677.2px;top:95.5px" width="24" height="24" viewBox="0 0 24 24"><rect x="2.5" y="5" width="19.5" height="14.5" fill="#7f9cd8" stroke="#3f5fa8"/><path d="M7.5 5 V19.5 M17 5 V19.5 M2.5 10 H22 M2.5 15 H22" stroke="#3f5fa8" stroke-width="0.9"/><path d="M10 2 H14.5 V18 L12.2 22.5 L10 18 Z" fill="#b8b8b8" stroke="#5a5a5a" stroke-width="0.9"/><path d="M10 5 L14.5 7 M10 8 L14.5 10 M10 11 L14.5 13 M10 14 L14.5 16" stroke="#5a5a5a" stroke-width="0.8"/></svg>
<svg class="abs" style="left:707.5px;top:95.5px" width="24" height="24" viewBox="0 0 24 24"><path d="M4 2.5 H8.5 V17 L6.2 21.5 L4 17 Z" fill="#b0b0b0" stroke="#555" stroke-width="0.9"/><path d="M4 5 L8.5 7 M4 8 L8.5 10 M4 11 L8.5 13 M4 14 L8.5 16" stroke="#555" stroke-width="0.8"/><path d="M11 21 L16 14.5 C14.5 11.5 17 9 20 9.5 L18 12 L19.5 13.5 L22 12 C22 15 19.5 17 17.5 16 L13 22 Z" fill="#d0d0d0" stroke="#666" stroke-width="0.9"/></svg>
<svg class="abs" style="left:738.8px;top:95.5px" width="24" height="24" viewBox="0 0 24 24"><g transform="translate(1.9 2) scale(0.84)"><rect x="3" y="7" width="18" height="12.5" rx="1.5" fill="#c8c8c8" stroke="#6a6a6a"/><rect x="8" y="4" width="7" height="3.5" fill="#b0b0b0" stroke="#6a6a6a"/><circle cx="12.5" cy="13" r="4.5" fill="#e8e8e8" stroke="#555"/><circle cx="12.5" cy="13" r="2.6" fill="#4a78c0"/></g></svg>
<svg class="abs" style="left:769.6px;top:95.5px" width="24" height="24" viewBox="0 0 24 24"><text x="8" y="7" font-family="Liberation Sans, sans-serif" font-weight="bold" font-size="6.5" fill="#111" textLength="15" lengthAdjust="spacingAndGlyphs">R1R2</text><text x="15.5" y="13.5" font-family="Liberation Sans, sans-serif" font-weight="bold" font-size="6.5" fill="#111">V1</text><text x="15.5" y="21" font-family="Liberation Sans, sans-serif" font-weight="bold" font-size="6.5" fill="#111">V2</text><path d="M6 7 H15 V16 H6 Z" fill="none" stroke="#7a92c8" stroke-width="0" /><g stroke="#7a92c8" stroke-width="0.9"><path d="M7 7.5 V16 M9 7.5 V16 M11 7.5 V16 M13 7.5 V16 M6 9 H15 M6 11 H15 M6 13 H15 M6 15 H15"/></g><path d="M13 22 L7.5 16 C5 17 2.5 15 3 12.5 L5.5 14.5 L7 13 L5 10.5 C8 10 10 12.5 9 14.5 L14.5 20.5 Z" fill="#d0d0d0" stroke="#666" stroke-width="0.9"/></svg>
<svg class="abs" style="left:801.2px;top:95.5px" width="24" height="24" viewBox="0 0 24 24"><rect x="10.5" y="4" width="11" height="11.5" fill="#f4f4f4" stroke="#7a7a7a"/><path d="M12.5 7 H19.5 M12.5 9.5 H19.5 M12.5 12 H19.5" stroke="#9a9a9a" stroke-width="0.9"/><path d="M3 3.5 H8 V17 L5.5 21.5 L3 17 Z" fill="#a8a8a8" stroke="#555" stroke-width="0.9"/><path d="M3 6 L8 8 M3 9 L8 11 M3 12 L8 14" stroke="#555" stroke-width="0.8"/></svg>
<svg class="abs" style="left:831.8px;top:95.5px" width="24" height="24" viewBox="0 0 24 24"><rect x="2" y="2" width="20.5" height="20.5" fill="#5f7fd0" stroke="#3a4f90" stroke-width="1.4"/><g fill="#e8f0ff"><circle cx="12" cy="5.5" r="1.1"/><circle cx="7" cy="9" r="1.1"/><circle cx="17" cy="9" r="1.1"/><circle cx="12" cy="12" r="1.1"/><circle cx="9" cy="15.5" r="1.1"/><circle cx="15" cy="15.5" r="1.1"/><circle cx="6" cy="19" r="1.1"/><circle cx="12" cy="19" r="1.1"/><circle cx="18" cy="19" r="1.1"/></g><path d="M12 5.5 L7 9 L12 12 L17 9 Z M12 12 L9 15.5 M12 12 L15 15.5" stroke="#b8c8f0" stroke-width="0.6" fill="none"/></svg>
<svg class="abs" style="left:862.8px;top:95.5px" width="24" height="24" viewBox="0 0 24 24"><path d="M3 13 L10 14 M14 10 L20 3.5" stroke="#d89020" stroke-width="1.4"/><circle cx="2.8" cy="13" r="1.7" fill="#fff" stroke="#d89020"/><circle cx="20.3" cy="3.5" r="1.7" fill="#fff" stroke="#d89020"/><circle cx="12" cy="13.5" r="6.3" fill="url(#go)" stroke="#c07810" stroke-width="1"/><text x="12" y="16.2" font-family="Liberation Sans, sans-serif" font-weight="bold" font-size="7" fill="#5a2a00" text-anchor="middle">TP</text></svg>
<svg class="abs" style="left:893.5px;top:95.5px" width="24" height="24" viewBox="0 0 24 24"><rect x="1.5" y="1.5" width="21" height="21" fill="#b9c6e4" opacity="0.55"/><rect x="3.5" y="3" width="4.3" height="4.3" rx="0.6" fill="#dfe6f6" stroke="#4a64a4" stroke-width="1.1"/><rect x="10" y="3" width="4.3" height="4.3" rx="0.6" fill="#dfe6f6" stroke="#4a64a4" stroke-width="1.1"/><rect x="16.5" y="3" width="4.3" height="4.3" rx="0.6" fill="#dfe6f6" stroke="#4a64a4" stroke-width="1.1"/><rect x="6.7" y="10" width="4.3" height="4.3" rx="0.6" fill="#dfe6f6" stroke="#4a64a4" stroke-width="1.1"/><rect x="13.2" y="10" width="4.3" height="4.3" rx="0.6" fill="#dfe6f6" stroke="#4a64a4" stroke-width="1.1"/><rect x="3.5" y="17" width="4.3" height="4.3" rx="0.6" fill="#dfe6f6" stroke="#4a64a4" stroke-width="1.1"/><rect x="10" y="17" width="4.3" height="4.3" rx="0.6" fill="#dfe6f6" stroke="#4a64a4" stroke-width="1.1"/><rect x="16.5" y="17" width="4.3" height="4.3" rx="0.6" fill="#dfe6f6" stroke="#4a64a4" stroke-width="1.1"/></svg>
<svg class="abs" style="left:924.4px;top:95.5px" width="24" height="24" viewBox="0 0 24 24"><rect x="2" y="2" width="20" height="20" fill="#b9c6e4" opacity="0.55"/><circle cx="5.5" cy="5.5" r="2.2" fill="#dfe6f6" stroke="#4a64a4" stroke-width="1.1"/><circle cx="5.5" cy="5.5" r="0.7" fill="#4a64a4"/><circle cx="5.5" cy="12" r="2.2" fill="#dfe6f6" stroke="#4a64a4" stroke-width="1.1"/><circle cx="5.5" cy="12" r="0.7" fill="#4a64a4"/><circle cx="5.5" cy="18.5" r="2.2" fill="#dfe6f6" stroke="#4a64a4" stroke-width="1.1"/><circle cx="5.5" cy="18.5" r="0.7" fill="#4a64a4"/><circle cx="12" cy="5.5" r="2.2" fill="#dfe6f6" stroke="#4a64a4" stroke-width="1.1"/><circle cx="12" cy="5.5" r="0.7" fill="#4a64a4"/><circle cx="12" cy="12" r="2.2" fill="#dfe6f6" stroke="#4a64a4" stroke-width="1.1"/><circle cx="12" cy="12" r="0.7" fill="#4a64a4"/><circle cx="12" cy="18.5" r="2.2" fill="#dfe6f6" stroke="#4a64a4" stroke-width="1.1"/><circle cx="12" cy="18.5" r="0.7" fill="#4a64a4"/><circle cx="18.5" cy="5.5" r="2.2" fill="#dfe6f6" stroke="#4a64a4" stroke-width="1.1"/><circle cx="18.5" cy="5.5" r="0.7" fill="#4a64a4"/><circle cx="18.5" cy="12" r="2.2" fill="#dfe6f6" stroke="#4a64a4" stroke-width="1.1"/><circle cx="18.5" cy="12" r="0.7" fill="#4a64a4"/><circle cx="18.5" cy="18.5" r="2.2" fill="#dfe6f6" stroke="#4a64a4" stroke-width="1.1"/><circle cx="18.5" cy="18.5" r="0.7" fill="#4a64a4"/></svg>
<svg class="abs" style="left:969.1px;top:95.5px" width="24" height="24" viewBox="0 0 24 24"><path d="M4 18.5 L8.5 6.5 L15.5 18.5 L20.5 6.5" fill="none" stroke="#5a78b8" stroke-width="2.2" stroke-linejoin="round"/><circle cx="4" cy="18.5" r="2.2" fill="#8fa8dc" stroke="#4a64a4" stroke-width="0.9"/><circle cx="8.5" cy="6.5" r="2.2" fill="#8fa8dc" stroke="#4a64a4" stroke-width="0.9"/><circle cx="15.5" cy="18.5" r="2.2" fill="#8fa8dc" stroke="#4a64a4" stroke-width="0.9"/><circle cx="20.5" cy="6.5" r="2.2" fill="#8fa8dc" stroke="#4a64a4" stroke-width="0.9"/></svg>
<svg class="abs" style="left:1013.7px;top:95.5px" width="24" height="24" viewBox="0 0 24 24"><rect x="6" y="7" width="12" height="14" fill="#f0f0f0" stroke="#707070" stroke-width="1.2"/><path d="M8 11 H16 M8 13.5 H16 M8 16 H16 M8 18.5 H16" stroke="#9a9a9a" stroke-width="0.9"/><path d="M2.5 6 C5 1 8 1 10 5 C12 9 14 8 16 4.5 C17.5 2.5 19 2.5 20.5 3.5" fill="none" stroke="#c83a4a" stroke-width="1.4"/></svg>
<svg class="abs" style="left:1045.0px;top:95.5px" width="24" height="24" viewBox="0 0 24 24"><path d="M3.5 8 C7 6.5 10 7 12 9 C14 7 17 6.5 20.5 8 V20 C17 18.5 14 19 12 21 C10 19 7 18.5 3.5 20 Z" fill="#f4f8ff" stroke="#4a6a9a" stroke-width="1.3"/><path d="M12 9 V21" stroke="#4a6a9a"/><path d="M6 12 H10 M6 15 H10 M14 12 H18 M14 15 H18" stroke="#d88a8a" stroke-width="0.9"/><path d="M2.5 6 C5 1 8 1 10 5 C12 9 14 8 16 4.5 C17.5 2.5 19 2.5 20.5 3.5" fill="none" stroke="#c83a4a" stroke-width="1.4"/></svg>
<svg class="abs" style="left:1076.4px;top:95.5px" width="24" height="24" viewBox="0 0 24 24"><rect x="4" y="8" width="16" height="13" fill="#6f8fd8" stroke="#2a4a8a" stroke-width="1.2" stroke-dasharray="2 1"/><rect x="8" y="6.5" width="8" height="4" fill="#e8eefc"/><path d="M9 14 H15 M12 13 V18 M10 17 L12 19 L14 17" stroke="#1a3a7a" stroke-width="1" fill="none"/><path d="M2.5 6 C5 1 8 1 10 5 C12 9 14 8 16 4.5 C17.5 2.5 19 2.5 20.5 3.5" fill="none" stroke="#c83a4a" stroke-width="1.4"/></svg>
<svg class="abs" style="left:1107.4px;top:95.5px" width="24" height="24" viewBox="0 0 24 24"><rect x="6" y="7.5" width="13" height="13.5" rx="1" fill="#f8f8f0" stroke="#606060" stroke-width="1.2"/><rect x="8" y="6" width="9" height="4" rx="1" fill="#e8d860" stroke="#a89020" stroke-width="0.8"/><path d="M9 15.5 L11.5 18 L16 12.5" fill="none" stroke="#1a7a2a" stroke-width="2"/><path d="M2.5 6 C5 1 8 1 10 5 C12 9 14 8 16 4.5 C17.5 2.5 19 2.5 20.5 3.5" fill="none" stroke="#c83a4a" stroke-width="1.4"/></svg>
<svg class="abs" style="left:1152.9px;top:95.5px" width="24" height="24" viewBox="0 0 24 24"><rect x="9" y="2.5" width="12.5" height="12.5" fill="#8fa6dc" stroke="#4a64a4"/><rect x="11" y="4.5" width="8.5" height="5" fill="#f0f4fc"/><rect x="4" y="8" width="13" height="13.5" fill="#8fa6dc" stroke="#4a64a4"/><rect x="6.5" y="10" width="8.5" height="5" fill="#f0f4fc"/><path d="M4 10 H2 M4 12.5 H2 M4 15 H2 M4 17.5 H2 M4 20 H2" stroke="#d8a020" stroke-width="1.4"/><path d="M9 4 H7 M9 6.5 H7" stroke="#d8a020" stroke-width="1.4"/></svg>
<svg class="abs" style="left:1183.8px;top:95.5px" width="24" height="24" viewBox="0 0 24 24"><path d="M3 3.5 L12 9.5 L21 3.5 V16 L12 10.5 L3 16 Z" fill="#8fb0e4" stroke="#4a70b4" stroke-width="1.1" stroke-linejoin="round"/><rect x="6.5" y="15" width="16" height="5.5" fill="#f4f4f4" stroke="#8a8a8a"/><rect x="8" y="16.5" width="9" height="2.5" fill="#2fa03a"/></svg>
<svg class="abs" style="left:1214.0px;top:95.5px" width="24" height="24" viewBox="0 0 24 24"><rect x="2.5" y="3.5" width="19" height="17" fill="#c4c4c4" stroke="#6a6a6a" stroke-width="1.2"/><rect x="2.5" y="3.5" width="19" height="3" fill="#8a8a8a"/><path d="M6.5 9.5 L12 13 L17.5 9.5 V17.5 L12 14 L6.5 17.5 Z" fill="#a8c4ec" stroke="#4a70b4" stroke-width="1"/></svg>
<svg class="abs" style="left:1246.2px;top:95.5px" width="24" height="24" viewBox="0 0 24 24"><path d="M12 2.5 C18 2.5 21.5 6.5 21.5 11 C21.5 15 18.5 18 15 19 C15.5 20.5 16.5 21.5 18 22 C14.5 22.5 12 21 11 19.5 C6 19 2.5 15.5 2.5 11 C2.5 6.5 6 2.5 12 2.5 Z" fill="url(#gib)" stroke="#4a64a4" stroke-width="1.1"/><text x="12" y="16.5" font-family="Liberation Sans, sans-serif" font-weight="bold" font-size="14" fill="#2a3a6a" text-anchor="middle">?</text></svg>

<div class="abs" style="left:0;top:125px;width:35px;height:922px;border-right:1px solid #c4c4c4;border-bottom:1px solid #c4c4c4"></div>
<div class="abs" style="left:0;top:228px;width:35px;height:1px;background:#c4c4c4"></div>
<div class="abs" style="left:0;top:482px;width:35px;height:1px;background:#c4c4c4"></div>
<div class="gripH" style="left:5px;top:129px;width:26px"></div>
<div class="gripH" style="left:5px;top:233px;width:26px"></div>
<div class="gripH" style="left:5px;top:487px;width:26px"></div>
<svg class="abs" style="left:6.0px;top:140.2px" width="22" height="22" viewBox="0 0 24 24"><rect x="3" y="8" width="14" height="14" fill="#2fae3a" stroke="#1a7a2a"/><path d="M3 12.5 H17 M3 17 H17 M7.5 8 V22 M12.5 8 V22" stroke="#126a1e" stroke-width="1"/><rect x="13" y="2.5" width="8" height="9" rx="1.5" fill="#c4c8d4" stroke="#6a6a7a"/><path d="M12 4.5 H13 M12 7 H13 M12 9.5 H13 M21 4.5 H22 M21 7 H22 M21 9.5 H22" stroke="#555" stroke-width="0.9"/><path d="M5 6 C5 2.5 9 2 11 3.5" fill="none" stroke="#d03a2a" stroke-width="1.6"/><path d="M3 4 L7.5 5 L4.5 8 Z" fill="#d03a2a"/></svg>
<svg class="abs" style="left:6.0px;top:170.8px" width="22" height="22" viewBox="0 0 24 24"><rect x="1.5" y="1.5" width="21" height="21" rx="3" fill="#c9d2e8" /><rect x="4.5" y="4.5" width="15" height="15" rx="1" fill="#f0f2f8" stroke="#5a6a9a" stroke-width="1.8" stroke-dasharray="1.2 1"/><text x="12" y="15" font-family="Liberation Sans, sans-serif" font-weight="bold" font-size="7.5" fill="#c0303a" text-anchor="middle">U1</text></svg>
<svg class="abs" style="left:6.0px;top:200.8px" width="22" height="22" viewBox="0 0 24 24"><rect x="2" y="7.5" width="5" height="9" fill="#e87070" stroke="#b03030"/><rect x="6" y="9.5" width="5" height="5" fill="#f8f0a0" stroke="#b0a030" stroke-width="0.8"/><rect x="11" y="7" width="11" height="10" rx="2" fill="#8a8a8a" stroke="#444"/><rect x="13" y="9" width="7" height="6" rx="1" fill="#c8c8c8"/></svg>
<svg class="abs" style="left:6.0px;top:244.7px" width="22" height="22" viewBox="0 0 24 24"><path d="M6 18 H10.5 V13 L14 9.5" fill="none" stroke="#111" stroke-width="1.8"/><path d="M15 8.5 L17 6.5" stroke="#111" stroke-width="1.8" stroke-dasharray="1.5 1"/><rect x="2.5" y="15.5" width="5" height="5" fill="#f4e860" stroke="#a89a20"/><rect x="16.5" y="3.5" width="5" height="5" fill="#f4e860" stroke="#a89a20"/></svg>
<svg class="abs" style="left:6.0px;top:274.0px" width="22" height="22" viewBox="0 0 24 24"><path d="M3 3 H7 V16.5 H21 V21 H3 Z" fill="#a9bbe4" stroke="#46609c" stroke-width="1.3"/><path d="M18 21 V23 H21" stroke="#46609c" fill="none"/><rect x="9" y="7" width="11.5" height="8" fill="#e8dce0" stroke="#b09aa0" stroke-width="0.7" stroke-dasharray="1 1"/><path d="M12.5 7 V15" stroke="#d03a3a" stroke-width="1.3"/><path d="M10.5 9.5 L12.5 7 L14.5 9.5 M10.5 12.5 L12.5 15 L14.5 12.5" fill="none" stroke="#d03a3a" stroke-width="1.2"/></svg>
<svg class="abs" style="left:6.0px;top:305.1px" width="22" height="22" viewBox="0 0 24 24"><path d="M2.5 12 H6.5 V4.5 H11.5 V19.5 H17 V12 H21.5" fill="none" stroke="#3a2a3a" stroke-width="1.6"/><path d="M9 14 V7 M7.5 9 L9 6.5 L10.5 9 M14.5 10 V17 M13 15 L14.5 17.5 L16 15" fill="none" stroke="#c03a4a" stroke-width="1.1"/></svg>
<svg class="abs" style="left:6.0px;top:334.4px" width="22" height="22" viewBox="0 0 24 24"><path d="M5 7 C5 12 9 12 6 20" fill="none" stroke="#4a5a7a" stroke-width="1.3"/><path d="M19 7 V21" stroke="#222" stroke-width="1.5"/><path d="M9 13.5 H14" stroke="#d03a3a" stroke-width="1.5"/><path d="M13 11 L17 13.5 L13 16 Z" fill="#d03a3a"/><rect x="2.5" y="2.5" width="5" height="5" fill="#f4e040" stroke="#a89a20"/><rect x="16.5" y="2.5" width="5" height="5" fill="#f4e040" stroke="#a89a20"/></svg>
<svg class="abs" style="left:6.0px;top:364.5px" width="22" height="22" viewBox="0 0 24 24"><path d="M4 2.5 H9 L20 11 V14 L9 22.5 H4 V18.5 H7.5 L14 12.5 L7.5 6.5 H4 Z" fill="#9ab0e0" stroke="#3a5498" stroke-width="1.3" stroke-linejoin="round"/><path d="M5 9 L9.5 12.5 L5 16 M9.5 12.5 H19" stroke="#c03a4a" stroke-width="1.2" fill="none"/><circle cx="9.5" cy="12.5" r="1.5" fill="#c03a4a"/></svg>
<svg class="abs" style="left:6.0px;top:394.0px" width="22" height="22" viewBox="0 0 24 24"><rect x="4" y="3" width="13" height="3" fill="#e8704a" stroke="#b04a2a" stroke-width="0.7"/><path d="M17 4.5 H21" stroke="#b04a2a" stroke-width="1"/><path d="M19.5 3 L21.5 4.5 L19.5 6" fill="none" stroke="#b04a2a" stroke-width="0.8"/><rect x="4" y="7.5" width="13" height="3" fill="#e8704a" stroke="#b04a2a" stroke-width="0.7"/><path d="M17 9.0 H21" stroke="#b04a2a" stroke-width="1"/><path d="M19.5 7.5 L21.5 9.0 L19.5 10.5" fill="none" stroke="#b04a2a" stroke-width="0.8"/><rect x="4" y="12" width="13" height="3" fill="#e8704a" stroke="#b04a2a" stroke-width="0.7"/><path d="M17 13.5 H21" stroke="#b04a2a" stroke-width="1"/><path d="M19.5 12 L21.5 13.5 L19.5 15" fill="none" stroke="#b04a2a" stroke-width="0.8"/><rect x="4" y="16.5" width="13" height="3" fill="#e8704a" stroke="#b04a2a" stroke-width="0.7"/><path d="M17 18.0 H21" stroke="#b04a2a" stroke-width="1"/><path d="M19.5 16.5 L21.5 18.0 L19.5 19.5" fill="none" stroke="#b04a2a" stroke-width="0.8"/></svg>
<svg class="abs" style="left:6.0px;top:424.7px" width="22" height="22" viewBox="0 0 24 24"><rect x="2.5" y="2.5" width="19.5" height="19.5" fill="#5a8ad8" stroke="#b8d0f0" stroke-width="1.4"/><path d="M6 6 H10 M6 6 V10 M18.5 6 H14.5 M18.5 6 V10 M6 18.5 H10 M6 18.5 V14.5 M18.5 18.5 H14.5 M18.5 18.5 V14.5" stroke="#fff" stroke-width="2.6"/><path d="M6.5 6.5 L18 18 M18 6.5 L6.5 18" stroke="#e04858" stroke-width="2"/></svg>
<svg class="abs" style="left:6.0px;top:454.5px" width="22" height="22" viewBox="0 0 24 24"><path d="M3 14 V7.5 C3 3.5 10 3.5 10 7.5 V17 C10 21.5 17 21.5 17 17 V14" fill="none" stroke="#2a3a5a" stroke-width="3"/><path d="M3 14 V7.5 C3 3.5 10 3.5 10 7.5 V17 C10 21.5 17 21.5 17 17 V14" fill="none" stroke="#9ab0d8" stroke-width="1"/><path d="M20.5 12 V17" stroke="#2a3a5a" stroke-width="1.4"/><circle cx="3" cy="14.5" r="1.6" fill="#7a94c8" stroke="#2a3a5a"/><circle cx="17" cy="13.5" r="1.6" fill="#7a94c8" stroke="#2a3a5a"/><circle cx="20.5" cy="11.5" r="1.6" fill="#7a94c8" stroke="#2a3a5a"/></svg>
<svg class="abs" style="left:6.0px;top:499.2px" width="22" height="22" viewBox="0 0 24 24"><path d="M3 3.5 L21 21" stroke="#b8c0d0" stroke-width="3.5" stroke-linecap="round"/><path d="M3 3.5 L21 21" stroke="#4a5670" stroke-width="1.8" stroke-linecap="round"/></svg>
<svg class="abs" style="left:6.0px;top:528.8px" width="22" height="22" viewBox="0 0 24 24"><rect x="4" y="5.5" width="16" height="13" fill="url(#gb)" stroke="#46609c" stroke-width="1.2"/></svg>
<svg class="abs" style="left:6.0px;top:559.5px" width="22" height="22" viewBox="0 0 24 24"><text x="10.5" y="12" font-family="Liberation Sans, sans-serif" font-size="12.5" fill="#8a8a8a" text-anchor="middle">abc</text><circle cx="16.5" cy="17" r="4.8" fill="#2fa83a" stroke="#1a7a2a" stroke-width="0.8"/><path d="M13.8 17 H19.2 M16.5 14.3 V19.7" stroke="#fff" stroke-width="1.7"/></svg>
<svg class="abs" style="left:6.0px;top:588.6px" width="22" height="22" viewBox="0 0 24 24"><text x="9.5" y="12" font-family="Liberation Sans, sans-serif" font-size="12.5" fill="#8a8a8a" text-anchor="middle">abc</text><path d="M9 21.5 L10 17.5 L19 8.5 L22 11.5 L13 20.5 Z" fill="#f4c020" stroke="#a87a10" stroke-width="0.9"/><path d="M9 21.5 L10 17.5 L13 20.5 Z" fill="#3a2a1a"/><path d="M18 9.5 L21 12.5" stroke="#e8e8e8" stroke-width="1.4"/></svg>

<svg class="abs" style="left:46px;top:136px" width="1526" height="900" viewBox="46 136 1526 900" font-family="Liberation Sans, sans-serif">
<polygon points="709.4,341.5 762.5,341.5 762.8,826.0 808.0,872.0 857.5,872.0 857.5,926.0 835.3,944.4 801.7,944.4 801.7,891.6 738.0,827.0 709.2,827.0" fill="#0f6912" stroke="#46d94a" stroke-width="0.9"/>
<polygon points="769.5,341.5 1002.0,341.5 1007.7,347.0 1007.7,443.0 985.6,421.8 985.6,365.3 843.3,365.3 799.0,409.4 774.4,409.4 769.5,403.0" fill="#0f6912" stroke="#46d94a" stroke-width="0.9"/>
<polygon points="854.8,377.3 976.4,377.3 976.4,413.0 968.0,421.4 837.0,421.8 807.0,451.8 807.0,425.3" fill="#0f6912" stroke="#46d94a" stroke-width="0.9"/>
<polygon points="769.8,570.0 804.4,537.4 853.4,537.4 883.0,508.8 883.0,524.6 833.5,575.0 833.5,627.0 791.0,669.4 775.0,669.4 769.8,664.0" fill="#0f6912" stroke="#46d94a" stroke-width="0.9"/>
<polygon points="833.5,648.0 775.0,705.8 827.0,705.8 890.8,770.6 890.8,759.5 833.5,701.3" fill="#0f6912" stroke="#46d94a" stroke-width="0.9"/>
<polygon points="948.6,572.7 957.8,572.7 957.8,650.2 948.6,650.2" fill="#0f6912" stroke="#46d94a" stroke-width="0.9"/>
<polygon points="907.7,777.7 913.5,777.7 913.5,831.1 864.6,879.5 864.6,866.0 904.4,827.2 904.4,816.8 907.7,812.9" fill="#0f6912" stroke="#46d94a" stroke-width="0.9"/>
<polygon points="948.7,831.1 948.7,853.2 925.9,853.2" fill="#0f6912" stroke="#46d94a" stroke-width="0.9"/>
<polygon points="770.9,754.4 799.1,754.4 804.4,759.7 804.4,811.8 778.0,811.8 770.9,806.5" fill="#0f6912" stroke="#46d94a" stroke-width="0.9"/>
<polygon points="896.5,421.2 985.0,421.2 985.0,434.5 968.6,451.0 968.6,490.0 959.2,490.0 959.2,507.0 950.8,499.0 893.0,498.4 883.0,508.8 883.0,434.1" fill="#73650a" stroke="#e2cf3a" stroke-width="0.9"/>
<polygon points="770.0,487.1 837.0,421.8 837.0,537.4 770.0,537.4" fill="#73650a" stroke="#e2cf3a" stroke-width="0.9"/>
<polygon points="883.0,523.5 898.0,510.0 948.5,510.0 948.5,572.7 906.2,572.7 833.5,646.6 833.5,625.8 883.0,577.0" fill="#73650a" stroke="#e2cf3a" stroke-width="0.9"/>
<polygon points="958.2,535.7 999.0,535.7 1007.3,528.2 1007.3,572.7 958.2,572.7" fill="#73650a" stroke="#e2cf3a" stroke-width="0.9"/>
<polygon points="762.8,706.5 771.0,706.5 771.0,756.0 762.8,756.0" fill="#73650a" stroke="#e2cf3a" stroke-width="0.9"/>
<polygon points="900.0,650.2 948.6,650.2 948.6,777.7 907.7,776.4 890.8,759.5 890.9,660.3" fill="#73650a" stroke="#e2cf3a" stroke-width="0.9"/>
<polygon points="957.8,650.2 1008.0,650.2 1008.0,791.5 1004.0,794.5 964.4,794.5 957.8,788.0" fill="#73650a" stroke="#e2cf3a" stroke-width="0.9"/>
<polygon points="804.3,811.5 854.7,811.8 890.8,772.6 904.4,784.3 904.4,827.0 856.8,874.4 831.5,872.6 831.5,838.2 827.5,833.9" fill="#73650a" stroke="#e2cf3a" stroke-width="0.9"/>
<polygon points="724.3,360.4 754.8,360.4 762.5,368.5 762.8,756.0 765.6,760.6 765.6,796.0 755.9,806.2 715.8,806.2 715.5,368.3" fill="#55a614" stroke="#9be648" stroke-width="0.9"/>
<polygon points="837.1,421.8 896.5,421.2 883.0,434.1 883.0,508.8 853.4,537.4 807.1,537.4 807.1,451.8" fill="#55a614" stroke="#9be648" stroke-width="0.9"/>
<polygon points="833.5,575.0 883.0,524.6 883.0,577.0 833.5,625.8" fill="#55a614" stroke="#9be648" stroke-width="0.9"/>
<polygon points="910.3,451.6 953.7,451.6 953.7,480.6 946.7,486.6 946.7,563.2 910.3,563.2" fill="#55a614" stroke="#9be648" stroke-width="0.9"/>
<polygon points="959.2,451.6 968.6,451.6 985.0,434.5 985.0,422.6 1007.3,442.0 1007.3,528.2 999.0,535.7 959.2,535.7 953.0,530.4 953.0,512.6 959.2,512.6" fill="#55a614" stroke="#9be648" stroke-width="0.9"/>
<polygon points="906.2,572.7 948.6,572.7 948.6,650.2 900.0,650.2 890.9,660.3 891.2,760.6 833.5,701.3 833.5,646.6" fill="#55a614" stroke="#9be648" stroke-width="0.9"/>
<polygon points="957.8,572.7 1007.7,572.7 1007.7,650.2 957.8,650.2" fill="#55a614" stroke="#9be648" stroke-width="0.9"/>
<polygon points="771.0,706.2 827.0,706.2 891.2,771.5 891.2,773.5 854.7,811.8 804.4,811.8 804.4,759.7 799.1,754.4 770.9,754.4" fill="#55a614" stroke="#9be648" stroke-width="0.9"/>
<polygon points="908.4,666.0 957.8,666.0 957.8,694.5 948.6,702.0 948.7,777.7 907.7,777.7" fill="#55a614" stroke="#9be648" stroke-width="0.9"/>
<polygon points="962.8,667.0 992.1,667.0 991.8,781.8 985.6,788.0 964.4,788.0 955.8,780.0 955.8,727.0 962.8,719.6" fill="#55a614" stroke="#9be648" stroke-width="0.9"/>
<polygon points="929.8,755.0 948.7,755.0 948.7,831.1 914.5,862.3 914.5,940.6 881.8,940.6 863.7,922.5 864.6,879.5 913.5,831.1 913.5,771.2" fill="#55a614" stroke="#9be648" stroke-width="0.9"/>
<polygon points="831.9,872.6 857.7,872.6 857.7,920.8 852.5,926.0 837.0,926.0 831.9,920.0" fill="#55a614" stroke="#9be648" stroke-width="0.9"/>
<polygon points="904.4,816.8 904.4,827.2 864.6,866.0 864.6,857.1" fill="#55a614" stroke="#9be648" stroke-width="0.9"/>
<polygon points="929.8,755.0 948.7,755.0 948.7,777.7 913.5,777.7 913.5,771.2" fill="#84cc1c" stroke="#9be648" stroke-width="0.9"/>
<polygon points="910.3,499.0 946.7,499.0 946.7,509.6 910.3,509.6" fill="#0f6912"/>
<polygon points="946.7,499.0 950.8,499.0 957.5,505.2 957.5,572.7 948.5,572.7 948.5,510.0 946.7,510.0" fill="#000"/>
<polygon points="948.6,650.2 957.8,650.2 957.8,666.0 948.6,666.0" fill="#000"/>
<polygon points="948.6,702.0 957.8,694.5 957.8,727.0 955.8,729.0 955.8,780.0 948.7,780.0" fill="#000"/>
<rect x="754" y="574.4" width="5.4" height="40" fill="#46c91f"/>
<rect x="755" y="674" width="8" height="32.5" fill="#46c91f"/>
<rect x="914.1" y="392.7" width="8.9" height="27.3" fill="#3fdb2c" rx="1.5"/>
<rect x="929.1" y="392.7" width="8.9" height="27.3" fill="#3fdb2c" rx="1.5"/>
<rect x="944.1" y="392.7" width="8.9" height="27.3" fill="#3fdb2c" rx="1.5"/>
<rect x="959.1" y="392.7" width="8.9" height="27.3" fill="#3fdb2c" rx="1.5"/>
<rect x="913.6" y="452.4" width="9.7" height="27.5" fill="#3fdb2c" rx="1.5"/>
<rect x="928.9" y="452.4" width="9.2" height="27.5" fill="#3fdb2c" rx="1.5"/>
<rect x="943.8" y="452.4" width="9.5" height="27.5" fill="#3fdb2c" rx="1.5"/>
<rect x="959.2" y="452.4" width="9.4" height="27.5" fill="#3fdb2c" rx="1.5"/>
<rect x="918.1" y="607.6" width="9.1" height="26.7" fill="#3fdb2c"/>
<rect x="918.1" y="666.0" width="9.1" height="31.0" fill="#3fdb2c"/>
<rect x="933.2" y="607.6" width="9.0" height="26.7" fill="#3fdb2c"/>
<rect x="933.2" y="666.0" width="9.0" height="31.0" fill="#3fdb2c"/>
<rect x="948.6" y="607.6" width="9.2" height="26.7" fill="#3fdb2c"/>
<rect x="948.6" y="666.0" width="9.2" height="31.0" fill="#3fdb2c"/>
<rect x="962.8" y="607.6" width="8.9" height="26.7" fill="#3fdb2c"/>
<rect x="962.8" y="666.0" width="8.9" height="31.0" fill="#3fdb2c"/>
<rect x="902.7" y="392.7" width="65.3" height="87.3" fill="none" stroke="#8fae5a" stroke-width="0.8"/>
<path d="M916.8 422.6 H967.5 V450.5 H925 L916.8 442.5 Z" fill="none" stroke="#b9d44e" stroke-width="2" stroke-linejoin="round"/>
<rect x="906.2" y="449.0" width="3.7" height="3.4" fill="#a89a3a"/>
<rect x="905.4" y="607.6" width="66.3" height="87.4" fill="none" stroke="#86c24a" stroke-width="0.8"/>
<path d="M919.8 638 H970.3 V663.6 H928 L919.8 656 Z" fill="none" stroke="#b0d850" stroke-width="1.6" stroke-linejoin="round"/>
<rect x="908.6" y="664.5" width="2.9" height="3.0" fill="#9ccf6a"/>
<rect x="927.4" y="512.6" width="18.2" height="20.8" fill="#3fdb2c"/>
<rect x="953.7" y="512.6" width="18.6" height="20.8" fill="#3fdb2c"/>
<rect x="923.3" y="510.4" width="52.7" height="27.2" fill="none" stroke="#a9e05a" stroke-width="1.6" rx="1.5"/>
<path d="M946.5 510.4 H958.5 M946.5 537.6 H958.5" stroke="#7fa8b0" stroke-width="1.6"/>
<rect x="928.0" y="734.0" width="17.5" height="21.0" fill="#3fdb2c"/>
<rect x="957.0" y="734.0" width="19.0" height="21.0" fill="#3fdb2c"/>
<rect x="926.5" y="729.5" width="52.0" height="27.5" fill="none" stroke="#a9e05a" stroke-width="1.6" rx="1.5"/>
<path d="M948.6 729.5 H957.8 M948.6 757 H957.8" stroke="#7fa8b0" stroke-width="1.6"/>
<circle cx="915.9" cy="516" r="5" fill="#4db526"/><circle cx="915.9" cy="516" r="1.9" fill="#52e23c"/>
<circle cx="917.5" cy="542.5" r="5" fill="#4db526"/><circle cx="917.5" cy="542.5" r="1.9" fill="#52e23c"/>
<circle cx="933.7" cy="542.5" r="5" fill="#4db526"/><circle cx="933.7" cy="542.5" r="1.9" fill="#52e23c"/>
<circle cx="917.5" cy="556.4" r="5" fill="#4db526"/><circle cx="917.5" cy="556.4" r="1.9" fill="#52e23c"/>
<circle cx="934.4" cy="556.4" r="5" fill="#4db526"/><circle cx="934.4" cy="556.4" r="1.9" fill="#52e23c"/>
<circle cx="978" cy="677.5" r="5" fill="#4db526"/><circle cx="978" cy="677.5" r="1.9" fill="#52e23c"/>
<circle cx="984" cy="693" r="5" fill="#4db526"/><circle cx="984" cy="693" r="1.9" fill="#52e23c"/>
<circle cx="917" cy="704.6" r="5" fill="#4db526"/><circle cx="917" cy="704.6" r="1.9" fill="#52e23c"/>
<circle cx="936.8" cy="704.6" r="5" fill="#4db526"/><circle cx="936.8" cy="704.6" r="1.9" fill="#52e23c"/>
<circle cx="927" cy="720.6" r="5" fill="#4db526"/><circle cx="927" cy="720.6" r="1.9" fill="#52e23c"/>
<circle cx="978.8" cy="716.5" r="5" fill="#4db526"/><circle cx="978.8" cy="716.5" r="1.9" fill="#52e23c"/>
<circle cx="917.2" cy="741.2" r="5" fill="#4db526"/><circle cx="917.2" cy="741.2" r="1.9" fill="#52e23c"/>
<circle cx="938" cy="766.5" r="5" fill="#4db526"/><circle cx="938" cy="766.5" r="1.9" fill="#52e23c"/>
<circle cx="966.8" cy="769" r="5" fill="#4db526"/><circle cx="966.8" cy="769" r="1.9" fill="#52e23c"/>
<circle cx="981.4" cy="777.3" r="5" fill="#4db526"/><circle cx="981.4" cy="777.3" r="1.9" fill="#52e23c"/>
<rect x="740.5" y="374.0" width="22.5" height="35.4" rx="11.2" ry="14.1" fill="#44d42c"/>
<rect x="770.0" y="374.0" width="23.0" height="35.4" rx="11.5" ry="14.4" fill="#35c532"/>
<rect x="740.5" y="497.0" width="22.5" height="35.0" rx="11.2" ry="14.1" fill="#44d42c"/>
<rect x="770.0" y="497.0" width="23.0" height="35.0" rx="11.5" ry="14.4" fill="#35c532"/>
<rect x="739.8" y="636.2" width="23.2" height="34.4" rx="11.6" ry="14.5" fill="#44d42c"/>
<rect x="770.0" y="636.2" width="23.0" height="34.4" rx="11.5" ry="14.4" fill="#35c532"/>
<rect x="741.8" y="769.4" width="22.9" height="34.5" rx="11.5" ry="14.3" fill="#44d42c"/>
<rect x="772.7" y="769.4" width="22.9" height="34.5" rx="11.4" ry="14.3" fill="#35c532"/>
<rect x="834.4" y="885.5" width="19.8" height="33.6" rx="9.9" ry="12.4" fill="#46d62c"/>
<rect x="864.6" y="885.5" width="20.6" height="33.6" rx="10.3" ry="12.9" fill="#46d62c"/>
<rect x="739.0" y="373.2" width="55.7" height="38.0" fill="none" stroke="#7fae52" stroke-width="0.8"/>
<rect x="739.0" y="496.0" width="55.7" height="37.8" fill="none" stroke="#7fae52" stroke-width="0.8"/>
<rect x="738.2" y="633.6" width="55.7" height="37.9" fill="none" stroke="#7fae52" stroke-width="0.8"/>
<rect x="740.5" y="767.7" width="55.5" height="37.9" fill="none" stroke="#7fae52" stroke-width="0.8"/>
<rect x="831.9" y="883.8" width="55.9" height="37.0" fill="none" stroke="#7fae52" stroke-width="0.8"/>
<path d="M763 361.8 H808.9 V421 H777 V413 H763" fill="none" stroke="#7fa070" stroke-width="0.8"/>
<path d="M763 485.5 H806 M763 535 H777 V541.5 H808.5 V535" fill="none" stroke="#7fa070" stroke-width="0.8"/>
<path d="M763 622 H808 V682 H776 V674.5 H763" fill="none" stroke="#7fa070" stroke-width="0.8"/>
<path d="M766 809 H778 V815.5 H808" fill="none" stroke="#7fa070" stroke-width="0.8"/>
<rect x="725.0" y="806.5" width="30.0" height="8.8" fill="none" stroke="#7fa070" stroke-width="0.8"/>
<path d="M819.3 873.5 V933.2 H874" fill="none" stroke="#7fa070" stroke-width="0.8"/>
<rect x="827.6" y="817.5" width="12.0" height="43.9" fill="none" stroke="#8a8a5a" stroke-width="0.8"/>
<rect x="808.6" y="835.6" width="51.7" height="9.8" fill="none" stroke="#8a8a5a" stroke-width="0.8"/>
<rect x="877.5" y="835.6" width="31.0" height="9.4" fill="none" stroke="#7fae52" stroke-width="0.8"/>
<text x="901" y="383" font-size="24" fill="none" stroke="#7fa070" stroke-width="0.7" textLength="29" lengthAdjust="spacingAndGlyphs">Q1</text>
<text x="766" y="452" font-size="26" fill="none" stroke="#7fa070" stroke-width="0.7">1</text>
<text x="763" y="578" font-size="26" fill="none" stroke="#7fa070" stroke-width="0.7">2</text>
<text x="726" y="844" font-size="25" fill="none" stroke="#7fa070" stroke-width="0.7" textLength="30">L2</text>
<text x="934.5" y="408" font-size="26" fill="#2fa32f" text-anchor="end" clip-path="url(#ca)">N1392809</text>
<text x="894.5" y="454" font-size="26" fill="#8ed222" text-anchor="end" clip-path="url(#cb)">N1393114</text>
<text x="717" y="517" font-size="27" fill="#86cf20" clip-path="url(#cc)">BAT</text>
<text x="866" y="541.5" font-size="25" fill="#b3a91c">GND</text>
<text x="783" y="713" font-size="22" fill="#86cf20" clip-path="url(#cd)">BAT</text>
<text x="889" y="761" font-size="27" fill="#a9b01c">GND</text>
<text x="949" y="776.5" font-size="26" fill="#b3a91c" clip-path="url(#ce)">3114</text>
<text x="859" y="697" font-size="10.5" fill="#6cc62a">N139</text>
<text x="896" y="852" font-size="10.5" fill="#86b04a">GND</text>
<text x="897" y="924.5" font-size="27" fill="#49c321" clip-path="url(#cf)">G</text>
<text x="912" y="690" font-size="27" fill="#7ad030" clip-path="url(#cg)" opacity="0.3">ND</text>
<defs><clipPath id="ca"><rect x="834" y="380" width="100" height="40"/></clipPath><clipPath id="cb"><rect x="808" y="425" width="90" height="40"/></clipPath><clipPath id="cc"><rect x="715" y="490" width="46" height="40"/></clipPath><clipPath id="cd"><rect x="780" y="706.5" width="50" height="20"/></clipPath><clipPath id="ce"><rect x="963" y="750" width="45" height="40"/></clipPath><clipPath id="cf"><rect x="890" y="895" width="24.5" height="40"/></clipPath><clipPath id="cg"><rect x="908" y="666" width="40" height="40"/></clipPath></defs>
<text x="753.25" y="391.7" font-size="5.5" fill="#e8ffe0" text-anchor="middle" transform="rotate(-90 753.25 391.7)">P1</text>
<text x="783.0" y="391.7" font-size="4.6" fill="#d0f0c0" text-anchor="middle" transform="rotate(-90 783.0 391.7)">N392839</text>
<text x="753.25" y="514.5" font-size="5.5" fill="#e8ffe0" text-anchor="middle" transform="rotate(-90 753.25 514.5)">P1</text>
<text x="783.0" y="514.5" font-size="4.6" fill="#d0f0c0" text-anchor="middle" transform="rotate(-90 783.0 514.5)">N392839</text>
<text x="752.9" y="653.4000000000001" font-size="5.5" fill="#e8ffe0" text-anchor="middle" transform="rotate(-90 752.9 653.4000000000001)">P1</text>
<text x="783.0" y="653.4000000000001" font-size="4.6" fill="#d0f0c0" text-anchor="middle" transform="rotate(-90 783.0 653.4000000000001)">N392839</text>
<text x="754.75" y="786.65" font-size="5.5" fill="#e8ffe0" text-anchor="middle" transform="rotate(-90 754.75 786.65)">P1</text>
<text x="785.6500000000001" y="786.65" font-size="4.6" fill="#d0f0c0" text-anchor="middle" transform="rotate(-90 785.6500000000001 786.65)">N393104</text>
<text x="846" y="902.5" font-size="5.5" fill="#e8ffe0" text-anchor="middle" transform="rotate(-90 846 902.5)">P1</text>
<text x="876.5" y="902.5" font-size="5.5" fill="#e8ffe0" text-anchor="middle" transform="rotate(-90 876.5 902.5)">P2</text>
<rect x="701.5" y="253.5" width="312" height="696" fill="none" stroke="#b4b4b4" stroke-width="1"/>
<circle cx="750" cy="301" r="16.9" fill="none" stroke="#bdbdbd" stroke-width="1"/>
<circle cx="966" cy="301" r="16.9" fill="none" stroke="#bdbdbd" stroke-width="1"/>
<circle cx="750" cy="901" r="16.9" fill="none" stroke="#bdbdbd" stroke-width="1"/>
<circle cx="966" cy="901" r="16.9" fill="none" stroke="#bdbdbd" stroke-width="1"/>
</svg>

<div class="abs" style="left:1588px;top:149px;width:340px;height:196px;border:1px solid #828790;border-right:none"></div>
<div class="t13" style="left:1604px;top:130px">Options</div>
<div class="abs" style="left:1649px;top:137px;width:205px;height:4px;background:#bdbdbd"></div>
<div class="t13" style="left:1604px;top:379px">Find</div>
<div class="abs" style="left:1630px;top:386px;width:224px;height:4px;background:#bdbdbd"></div>
<svg class="abs" style="left:1862px;top:132px" width="55" height="14" viewBox="0 0 55 14"><rect x="4" y="7" width="7" height="2" fill="#000"/><g fill="none" stroke="#000" stroke-width="1.4"><rect x="24.7" y="1" width="5" height="4"/><rect x="22.7" y="3.7" width="5" height="4.6" fill="#f0f0f0"/><path d="M40 0.3 L46.8 7.1 M46.8 0.3 L40 7.1"/></g></svg>
<svg class="abs" style="left:1862px;top:381px" width="55" height="14" viewBox="0 0 55 14"><rect x="4" y="7" width="7" height="2" fill="#000"/><g fill="none" stroke="#000" stroke-width="1.4"><rect x="24.7" y="1" width="5" height="4"/><rect x="22.7" y="3.7" width="5" height="4.6" fill="#f0f0f0"/><path d="M40 0.3 L46.8 7.1 M46.8 0.3 L40 7.1"/></g></svg>
<div class="abs" style="left:1588px;top:398px;width:340px;height:649px;border:1px solid #828790;border-right:none"></div>
<div class="t11" style="left:1597px;top:184px">Active Class and Subclass:</div>
<div class="abs" style="left:1625px;top:213px;width:150px;height:21px;background:#e1e1e1;border:1px solid #adadad"></div>
<div class="t11" style="left:1629px;top:217px">Board Geometry</div>
<svg class="abs" style="left:1757px;top:219px" width="14" height="10"><path d="M2 2 L7 7 L12 2" fill="none" stroke="#444" stroke-width="1.2"/></svg>
<div class="abs" style="left:1625px;top:246px;width:150px;height:24px;background:#fff;border:1px solid #7a7a7a;border-bottom:none"></div>
<div class="abs" style="left:1630px;top:251px;width:15px;height:18px;background:#5c8c2f;border:1px solid #222"></div>
<div class="t11" style="left:1650px;top:249px">Silkscreen_Top</div>
<svg class="abs" style="left:1757px;top:255px" width="14" height="10"><path d="M2 2 L7 7 L12 2" fill="none" stroke="#444" stroke-width="1.2"/></svg>
<div class="abs" style="left:1605px;top:249px;width:12px;height:13px;background:#5c8c2f;border:1px solid #c8c8c8;border-left:2px solid #7a7a7a;border-top:1px solid #7a7a7a"></div>
<div class="abs" style="left:1588px;top:373px;width:329px;height:1px;background:#d9d9d9"></div>
<div class="abs" style="left:1590px;top:352px;width:86px;height:21px;background:#f0f0f0;border:1px solid #d9d9d9;border-bottom:none"></div>
<div class="t13" style="left:1603px;top:356px">Command</div>
<div class="abs" style="left:1675px;top:352px;width:59px;height:21px;background:#f0f0f0;border:1px solid #d9d9d9;border-bottom:none"></div>
<div class="t13" style="left:1691px;top:356px">View</div>
<div class="abs" style="left:1733px;top:350px;width:57px;height:24px;background:#fff;border:1px solid #d9d9d9;border-bottom:none"></div>
<div class="t13" style="left:1749px;top:355px">Find</div>
<div class="abs" style="left:1789px;top:352px;width:73px;height:21px;background:#f0f0f0;border:1px solid #d9d9d9;border-bottom:none"></div>
<div class="t13" style="left:1803px;top:356px">Visibility</div>
<div class="abs" style="left:1598px;top:428px;width:188px;height:229px;border:1px solid #dcdcdc"></div>
<div class="t11" style="left:1603px;top:422px;background:#f0f0f0;padding:0 3px">Design Object Find Filter</div>
<div class="abs" style="left:1605px;top:441px;width:43px;height:14px;background:#e1e1e1;border:1px solid #adadad"></div><div class="t11" style="left:1611px;top:442px">All On</div>
<div class="abs" style="left:1661px;top:441px;width:47px;height:14px;background:#e1e1e1;border:1px solid #adadad"></div><div class="t11" style="left:1669px;top:442px">All Off</div>
<div class="cb" style="left:1604px;top:461px"></div><div class="t11" style="left:1623px;top:461px">Groups</div>
<div class="cb" style="left:1688px;top:461px"><svg width="14" height="14" viewBox="0 0 14 14"><path d="M2.5 7.2 L5.6 10.6 L11.8 3" fill="none" stroke="#444" stroke-width="1.4"/></svg></div><div class="t11" style="left:1707px;top:461px">Shapes</div>
<div class="cb dis" style="left:1604px;top:483px"></div><div class="t11" style="left:1623px;top:483px;color:#8a8a8a">Comps</div>
<div class="cb" style="left:1688px;top:483px"><svg width="14" height="14" viewBox="0 0 14 14"><path d="M2.5 7.2 L5.6 10.6 L11.8 3" fill="none" stroke="#444" stroke-width="1.4"/></svg></div><div class="t11" style="left:1707px;top:483px">Voids/Cavities</div>
<div class="cb" style="left:1604px;top:505px"><svg width="14" height="14" viewBox="0 0 14 14"><path d="M2.5 7.2 L5.6 10.6 L11.8 3" fill="none" stroke="#444" stroke-width="1.4"/></svg></div><div class="t11" style="left:1623px;top:505px">Symbols</div>
<div class="cb" style="left:1688px;top:505px"><svg width="14" height="14" viewBox="0 0 14 14"><path d="M2.5 7.2 L5.6 10.6 L11.8 3" fill="none" stroke="#444" stroke-width="1.4"/></svg></div><div class="t11" style="left:1707px;top:505px">Cline segs</div>
<div class="cb dis" style="left:1604px;top:529px"></div><div class="t11" style="left:1623px;top:529px;color:#8a8a8a">Functions</div>
<div class="cb" style="left:1688px;top:527px"><svg width="14" height="14" viewBox="0 0 14 14"><path d="M2.5 7.2 L5.6 10.6 L11.8 3" fill="none" stroke="#444" stroke-width="1.4"/></svg></div><div class="t11" style="left:1707px;top:527px">Other segs</div>
<div class="cb" style="left:1604px;top:549px"><svg width="14" height="14" viewBox="0 0 14 14"><path d="M2.5 7.2 L5.6 10.6 L11.8 3" fill="none" stroke="#444" stroke-width="1.4"/></svg></div><div class="t11" style="left:1623px;top:549px">Nets</div>
<div class="cb" style="left:1688px;top:549px"><svg width="14" height="14" viewBox="0 0 14 14"><path d="M2.5 7.2 L5.6 10.6 L11.8 3" fill="none" stroke="#444" stroke-width="1.4"/></svg></div><div class="t11" style="left:1707px;top:549px">Figures</div>
<div class="cb" style="left:1604px;top:571px"><svg width="14" height="14" viewBox="0 0 14 14"><path d="M2.5 7.2 L5.6 10.6 L11.8 3" fill="none" stroke="#444" stroke-width="1.4"/></svg></div><div class="t11" style="left:1623px;top:571px">Pins</div>
<div class="cb" style="left:1688px;top:571px"><svg width="14" height="14" viewBox="0 0 14 14"><path d="M2.5 7.2 L5.6 10.6 L11.8 3" fill="none" stroke="#444" stroke-width="1.4"/></svg></div><div class="t11" style="left:1707px;top:571px">DRC errors</div>
<div class="cb" style="left:1604px;top:593px"><svg width="14" height="14" viewBox="0 0 14 14"><path d="M2.5 7.2 L5.6 10.6 L11.8 3" fill="none" stroke="#444" stroke-width="1.4"/></svg></div><div class="t11" style="left:1623px;top:593px">Vias</div>
<div class="cb" style="left:1688px;top:593px"><svg width="14" height="14" viewBox="0 0 14 14"><path d="M2.5 7.2 L5.6 10.6 L11.8 3" fill="none" stroke="#444" stroke-width="1.4"/></svg></div><div class="t11" style="left:1707px;top:593px">Text</div>
<div class="cb" style="left:1604px;top:615px"><svg width="14" height="14" viewBox="0 0 14 14"><path d="M2.5 7.2 L5.6 10.6 L11.8 3" fill="none" stroke="#444" stroke-width="1.4"/></svg></div><div class="t11" style="left:1623px;top:615px">Clines</div>
<div class="cb" style="left:1688px;top:615px"><svg width="14" height="14" viewBox="0 0 14 14"><path d="M2.5 7.2 L5.6 10.6 L11.8 3" fill="none" stroke="#444" stroke-width="1.4"/></svg></div><div class="t11" style="left:1707px;top:615px">Ratsnests</div>
<div class="cb" style="left:1604px;top:637px"><svg width="14" height="14" viewBox="0 0 14 14"><path d="M2.5 7.2 L5.6 10.6 L11.8 3" fill="none" stroke="#444" stroke-width="1.4"/></svg></div><div class="t11" style="left:1623px;top:637px">Lines</div>
<div class="cb" style="left:1688px;top:637px"><svg width="14" height="14" viewBox="0 0 14 14"><path d="M2.5 7.2 L5.6 10.6 L11.8 3" fill="none" stroke="#444" stroke-width="1.4"/></svg></div><div class="t11" style="left:1707px;top:637px">Rat Ts</div>
<div class="abs" style="left:1597px;top:748px;width:189px;height:63px;border:1px solid #dcdcdc"></div>
<div class="t11" style="left:1603px;top:741px;background:#f0f0f0;padding:0 3px">Find By Name</div>
<div class="abs" style="left:1604px;top:758px;width:122px;height:20px;background:#e1e1e1;border:1px solid #adadad"></div><div class="t11" style="left:1608px;top:761px">Symbol (or Pin)</div>
<svg class="abs" style="left:1708px;top:763px" width="14" height="10"><path d="M2 2 L7 7 L12 2" fill="none" stroke="#444" stroke-width="1.2"/></svg>
<div class="abs" style="left:1730px;top:758px;width:52px;height:20px;background:#e1e1e1;border:1px solid #adadad"></div><div class="t11" style="left:1734px;top:761px;width:24px;overflow:hidden">Name</div>
<svg class="abs" style="left:1764px;top:763px" width="14" height="10"><path d="M2 2 L7 7 L12 2" fill="none" stroke="#444" stroke-width="1.2"/></svg>
<svg class="abs" style="left:1603px;top:785px" width="10" height="12"><path d="M2 2 L6.5 6 L2 10" fill="none" stroke="#333" stroke-width="1.1"/></svg>
<div class="abs" style="left:1618px;top:780px;width:108px;height:22px;background:#fff;border:2px solid #6d6d6d;border-right:1px solid #9a9a9a;border-bottom:1px solid #9a9a9a"></div>
<div class="abs" style="left:1731px;top:782px;width:48px;height:20px;background:#e1e1e1;border:1px solid #adadad"></div><div class="t11" style="left:1738px;top:785px">More...</div>

<div class="t13" style="left:2px;top:1057px">Idle</div>
<div class="t13" style="left:508px;top:1057px">Silkscreen_Top</div>
<div class="t13" style="left:677px;top:1057px">36.500, 60.700</div>
<div class="t13" style="left:1251px;top:1057px">General edit</div>
<div class="t13" style="left:1421px;top:1057px">Off</div>
<div class="t13" style="left:1757px;top:1057px">0</div>
<div class="vsep" style="left:166px;top:1051px;height:25px;background:#d4d4d4"></div>
<div class="vsep" style="left:502px;top:1051px;height:25px;background:#d4d4d4"></div>
<div class="vsep" style="left:672px;top:1051px;height:25px;background:#d4d4d4"></div>
<div class="vsep" style="left:840px;top:1051px;height:25px;background:#d4d4d4"></div>
<div class="vsep" style="left:907px;top:1051px;height:25px;background:#d4d4d4"></div>
<div class="vsep" style="left:1077px;top:1051px;height:25px;background:#d4d4d4"></div>
<div class="vsep" style="left:1246px;top:1051px;height:25px;background:#d4d4d4"></div>
<div class="vsep" style="left:1414px;top:1051px;height:25px;background:#d4d4d4"></div>
<div class="abs" style="left:171px;top:1050px;width:162px;height:26px;background:#00ff00"></div>
<div class="abs" style="left:1588px;top:1050px;width:164px;height:26px;background:#00ff00"></div>
<div class="t13" style="left:1588px;top:1057px;color:#1a5a1a">DRC</div>
<div class="abs" style="left:845px;top:1051px;width:26px;height:25px;background:#e1e1e1;border:1px solid #adadad;border-bottom:none"></div><div class="t13" style="left:854px;top:1057px">P</div>
<div class="abs" style="left:880px;top:1051px;width:26px;height:25px;background:#e1e1e1;border:1px solid #adadad;border-bottom:none"></div><div class="t13" style="left:889px;top:1057px">A</div>

</body></html>
